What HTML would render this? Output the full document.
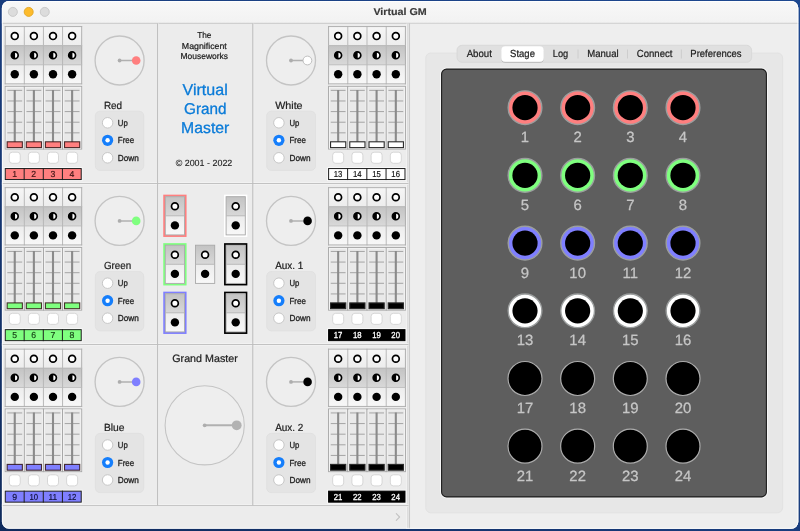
<!DOCTYPE html>
<html><head><meta charset="utf-8"><title>Virtual GM</title>
<style>html,body{margin:0;padding:0;background:#173a78;overflow:hidden}body{width:800px;height:531px}svg{display:block;will-change:transform}text{font-family:"Liberation Sans",sans-serif;text-rendering:geometricPrecision}</style>
</head><body>
<svg width="800" height="531" viewBox="0 0 800 531" font-family="Liberation Sans, sans-serif">
<defs>
<linearGradient id="desk" x1="0" y1="1" x2="1" y2="0"><stop offset="0" stop-color="#0f2a5c"/><stop offset="0.5" stop-color="#193d7e"/><stop offset="1" stop-color="#1d4890"/></linearGradient>
<linearGradient id="gLight1" x1="0" y1="0" x2="0" y2="1"><stop offset="0" stop-color="#f6f6f6"/><stop offset="1" stop-color="#ededed"/></linearGradient>
<linearGradient id="gDark" x1="0" y1="0" x2="0" y2="1"><stop offset="0" stop-color="#c3c3c3"/><stop offset="1" stop-color="#d8d8d8"/></linearGradient>
<linearGradient id="gLight2" x1="0" y1="0" x2="0" y2="1"><stop offset="0" stop-color="#ececec"/><stop offset="1" stop-color="#f8f8f8"/></linearGradient>
<linearGradient id="tbar" x1="0" y1="0" x2="0" y2="1"><stop offset="0" stop-color="#f8f8f8"/><stop offset="1" stop-color="#f2f2f2"/></linearGradient>
<clipPath id="win"><rect x="1.9" y="1.0" width="796.4" height="527.8" rx="7" ry="7"/></clipPath>
<filter id="sh" x="-20%" y="-30%" width="140%" height="180%"><feDropShadow dx="0" dy="0.6" stdDeviation="0.7" flood-color="#000" flood-opacity="0.28"/></filter>
</defs>
<rect x="0" y="0" width="800" height="531" fill="url(#desk)"/>
<g clip-path="url(#win)">
<rect x="0" y="0" width="800" height="531" fill="#ececec"/>
<rect x="0" y="0" width="800" height="23" fill="url(#tbar)"/>
<line x1="0" y1="23.3" x2="800" y2="23.3" stroke="#c9c9c9" stroke-width="1"/>
<circle cx="12.85" cy="11.9" r="4.5" fill="#dcdcdc" stroke="#c6c6c6" stroke-width="0.9"/>
<circle cx="28.7" cy="11.9" r="4.5" fill="#fdbb2c" stroke="#e2a622" stroke-width="0.9"/>
<circle cx="44.75" cy="11.9" r="4.5" fill="#dcdcdc" stroke="#c6c6c6" stroke-width="0.9"/>
<text x="400.1" y="15.0" font-size="9.9" fill="#3a3a3a" text-anchor="middle" font-weight="bold" textLength="53.4" lengthAdjust="spacingAndGlyphs" stroke="#3a3a3a" stroke-width="0.15" stroke-linejoin="round" >Virtual GM</text>
<rect x="410" y="23.8" width="390" height="510" fill="#eeeeee"/>
<rect x="406.2" y="23.6" width="3.2" height="510" fill="#f2f2f2"/>
<line x1="407.8" y1="23.3" x2="407.8" y2="531" stroke="#d8d8d8" stroke-width="1.2"/>
<line x1="409.45" y1="23.3" x2="409.45" y2="531" stroke="#c9c9c9" stroke-width="1.15"/>
<line x1="0" y1="182.6" x2="408.4" y2="182.6" stroke="#f4f4f4" stroke-width="0.8"/>
<line x1="0" y1="184.4" x2="408.4" y2="184.4" stroke="#f2f2f2" stroke-width="0.8"/>
<line x1="0" y1="343.6" x2="408.4" y2="343.6" stroke="#f4f4f4" stroke-width="0.8"/>
<line x1="0" y1="345.4" x2="408.4" y2="345.4" stroke="#f2f2f2" stroke-width="0.8"/>
<line x1="0" y1="504.70000000000005" x2="408.4" y2="504.70000000000005" stroke="#f4f4f4" stroke-width="0.8"/>
<line x1="0" y1="506.5" x2="408.4" y2="506.5" stroke="#f2f2f2" stroke-width="0.8"/>
<line x1="158.5" y1="23.5" x2="158.5" y2="505.6" stroke="#f4f4f4" stroke-width="0.8"/>
<line x1="253.70000000000002" y1="23.5" x2="253.70000000000002" y2="505.6" stroke="#f4f4f4" stroke-width="0.8"/>
<line x1="0" y1="183.5" x2="408.4" y2="183.5" stroke="#c2c2c2" stroke-width="1"/>
<line x1="0" y1="344.5" x2="408.4" y2="344.5" stroke="#c2c2c2" stroke-width="1"/>
<line x1="0" y1="505.6" x2="408.4" y2="505.6" stroke="#c2c2c2" stroke-width="1"/>
<line x1="157.6" y1="23.5" x2="157.6" y2="505.6" stroke="#bcbcbc" stroke-width="1.05"/>
<line x1="252.8" y1="23.5" x2="252.8" y2="505.6" stroke="#bcbcbc" stroke-width="1.05"/>
<path d="M396.3,513.6 L399.6,517 L396.3,520.4" fill="none" stroke="#c3c3c3" stroke-width="1.1" stroke-linecap="round" stroke-linejoin="round"/>
<rect x="4.75" y="26.1" width="77.38000000000001" height="19.1" fill="url(#gLight1)"/>
<rect x="4.75" y="45.2" width="77.38000000000001" height="19.1" fill="url(#gDark)"/>
<rect x="4.75" y="64.30000000000001" width="77.38000000000001" height="20.0" fill="url(#gLight2)"/>
<line x1="5.2" y1="26.1" x2="5.2" y2="84.30000000000001" stroke="#adadad" stroke-width="0.95"/>
<line x1="24.32" y1="26.1" x2="24.32" y2="84.30000000000001" stroke="#b6b6b6" stroke-width="0.95"/>
<line x1="43.44" y1="26.1" x2="43.44" y2="84.30000000000001" stroke="#b6b6b6" stroke-width="0.95"/>
<line x1="62.56" y1="26.1" x2="62.56" y2="84.30000000000001" stroke="#b6b6b6" stroke-width="0.95"/>
<line x1="81.68" y1="26.1" x2="81.68" y2="84.30000000000001" stroke="#adadad" stroke-width="0.95"/>
<line x1="4.75" y1="26.55" x2="82.13000000000001" y2="26.55" stroke="#adadad" stroke-width="0.95"/>
<line x1="4.75" y1="45.65" x2="82.13000000000001" y2="45.65" stroke="#b8b8b8" stroke-width="0.95"/>
<line x1="4.75" y1="64.75" x2="82.13000000000001" y2="64.75" stroke="#b8b8b8" stroke-width="0.95"/>
<line x1="4.75" y1="83.85" x2="82.13000000000001" y2="83.85" stroke="#adadad" stroke-width="0.95"/>
<circle cx="14.76" cy="36.1" r="3.4" fill="#fff" stroke="#000" stroke-width="1.7"/>
<circle cx="14.76" cy="55.2" r="3.4" fill="#fff" stroke="#000" stroke-width="1.7"/>
<path d="M15.06,51.4 A3.8,3.8 0 0 0 15.06,59.0 Z" fill="#000"/>
<circle cx="14.76" cy="74.3" r="4.2" fill="#000"/>
<circle cx="33.88" cy="36.1" r="3.4" fill="#fff" stroke="#000" stroke-width="1.7"/>
<circle cx="33.88" cy="55.2" r="3.4" fill="#fff" stroke="#000" stroke-width="1.7"/>
<path d="M34.18,51.4 A3.8,3.8 0 0 0 34.18,59.0 Z" fill="#000"/>
<circle cx="33.88" cy="74.3" r="4.2" fill="#000"/>
<circle cx="53.0" cy="36.1" r="3.4" fill="#fff" stroke="#000" stroke-width="1.7"/>
<circle cx="53.0" cy="55.2" r="3.4" fill="#fff" stroke="#000" stroke-width="1.7"/>
<path d="M53.3,51.4 A3.8,3.8 0 0 0 53.3,59.0 Z" fill="#000"/>
<circle cx="53.0" cy="74.3" r="4.2" fill="#000"/>
<circle cx="72.12" cy="36.1" r="3.4" fill="#fff" stroke="#000" stroke-width="1.7"/>
<circle cx="72.12" cy="55.2" r="3.4" fill="#fff" stroke="#000" stroke-width="1.7"/>
<path d="M72.42,51.4 A3.8,3.8 0 0 0 72.42,59.0 Z" fill="#000"/>
<circle cx="72.12" cy="74.3" r="4.2" fill="#000"/>
<rect x="4.75" y="85.9" width="77.38000000000001" height="63.6" fill="#e9e9e9"/>
<rect x="5.2" y="86.35000000000001" width="19.12" height="62.7" fill="none" stroke="#a8a8a8" stroke-width="0.95"/>
<rect x="6.15" y="87.30000000000001" width="17.22" height="60.800000000000004" fill="none" stroke="#f4f4f4" stroke-width="0.8"/>
<line x1="7.359999999999999" y1="90.35" x2="22.16" y2="90.35" stroke="#a0a0a0" stroke-width="0.95"/>
<line x1="7.359999999999999" y1="100.97" x2="22.16" y2="100.97" stroke="#a0a0a0" stroke-width="0.95"/>
<line x1="7.359999999999999" y1="111.59" x2="22.16" y2="111.59" stroke="#a0a0a0" stroke-width="0.95"/>
<line x1="7.359999999999999" y1="122.21" x2="22.16" y2="122.21" stroke="#a0a0a0" stroke-width="0.95"/>
<line x1="7.359999999999999" y1="132.83" x2="22.16" y2="132.83" stroke="#a0a0a0" stroke-width="0.95"/>
<line x1="7.359999999999999" y1="143.45" x2="22.16" y2="143.45" stroke="#a0a0a0" stroke-width="0.95"/>
<line x1="14.76" y1="89.9" x2="14.76" y2="142.9" stroke="#8a8a8a" stroke-width="2.1"/>
<rect x="7.16" y="141.8" width="15.2" height="5.8" fill="#FF7F7F" stroke="rgba(40,10,10,0.82)" stroke-width="1.1"/>
<rect x="9.26" y="152.2" width="11" height="11.1" rx="3" fill="#fff" stroke="#d2d2d2" stroke-width="0.9"/>
<rect x="24.32" y="86.35000000000001" width="19.12" height="62.7" fill="none" stroke="#a8a8a8" stroke-width="0.95"/>
<rect x="25.27" y="87.30000000000001" width="17.22" height="60.800000000000004" fill="none" stroke="#f4f4f4" stroke-width="0.8"/>
<line x1="26.480000000000004" y1="90.35" x2="41.28" y2="90.35" stroke="#a0a0a0" stroke-width="0.95"/>
<line x1="26.480000000000004" y1="100.97" x2="41.28" y2="100.97" stroke="#a0a0a0" stroke-width="0.95"/>
<line x1="26.480000000000004" y1="111.59" x2="41.28" y2="111.59" stroke="#a0a0a0" stroke-width="0.95"/>
<line x1="26.480000000000004" y1="122.21" x2="41.28" y2="122.21" stroke="#a0a0a0" stroke-width="0.95"/>
<line x1="26.480000000000004" y1="132.83" x2="41.28" y2="132.83" stroke="#a0a0a0" stroke-width="0.95"/>
<line x1="26.480000000000004" y1="143.45" x2="41.28" y2="143.45" stroke="#a0a0a0" stroke-width="0.95"/>
<line x1="33.88" y1="89.9" x2="33.88" y2="142.9" stroke="#8a8a8a" stroke-width="2.1"/>
<rect x="26.28" y="141.8" width="15.2" height="5.8" fill="#FF7F7F" stroke="rgba(40,10,10,0.82)" stroke-width="1.1"/>
<rect x="28.380000000000003" y="152.2" width="11" height="11.1" rx="3" fill="#fff" stroke="#d2d2d2" stroke-width="0.9"/>
<rect x="43.440000000000005" y="86.35000000000001" width="19.12" height="62.7" fill="none" stroke="#a8a8a8" stroke-width="0.95"/>
<rect x="44.39" y="87.30000000000001" width="17.22" height="60.800000000000004" fill="none" stroke="#f4f4f4" stroke-width="0.8"/>
<line x1="45.6" y1="90.35" x2="60.4" y2="90.35" stroke="#a0a0a0" stroke-width="0.95"/>
<line x1="45.6" y1="100.97" x2="60.4" y2="100.97" stroke="#a0a0a0" stroke-width="0.95"/>
<line x1="45.6" y1="111.59" x2="60.4" y2="111.59" stroke="#a0a0a0" stroke-width="0.95"/>
<line x1="45.6" y1="122.21" x2="60.4" y2="122.21" stroke="#a0a0a0" stroke-width="0.95"/>
<line x1="45.6" y1="132.83" x2="60.4" y2="132.83" stroke="#a0a0a0" stroke-width="0.95"/>
<line x1="45.6" y1="143.45" x2="60.4" y2="143.45" stroke="#a0a0a0" stroke-width="0.95"/>
<line x1="53.0" y1="89.9" x2="53.0" y2="142.9" stroke="#8a8a8a" stroke-width="2.1"/>
<rect x="45.4" y="141.8" width="15.2" height="5.8" fill="#FF7F7F" stroke="rgba(40,10,10,0.82)" stroke-width="1.1"/>
<rect x="47.5" y="152.2" width="11" height="11.1" rx="3" fill="#fff" stroke="#d2d2d2" stroke-width="0.9"/>
<rect x="62.56" y="86.35000000000001" width="19.12" height="62.7" fill="none" stroke="#a8a8a8" stroke-width="0.95"/>
<rect x="63.51" y="87.30000000000001" width="17.22" height="60.800000000000004" fill="none" stroke="#f4f4f4" stroke-width="0.8"/>
<line x1="64.72" y1="90.35" x2="79.52000000000001" y2="90.35" stroke="#a0a0a0" stroke-width="0.95"/>
<line x1="64.72" y1="100.97" x2="79.52000000000001" y2="100.97" stroke="#a0a0a0" stroke-width="0.95"/>
<line x1="64.72" y1="111.59" x2="79.52000000000001" y2="111.59" stroke="#a0a0a0" stroke-width="0.95"/>
<line x1="64.72" y1="122.21" x2="79.52000000000001" y2="122.21" stroke="#a0a0a0" stroke-width="0.95"/>
<line x1="64.72" y1="132.83" x2="79.52000000000001" y2="132.83" stroke="#a0a0a0" stroke-width="0.95"/>
<line x1="64.72" y1="143.45" x2="79.52000000000001" y2="143.45" stroke="#a0a0a0" stroke-width="0.95"/>
<line x1="72.12" y1="89.9" x2="72.12" y2="142.9" stroke="#8a8a8a" stroke-width="2.1"/>
<rect x="64.52000000000001" y="141.8" width="15.2" height="5.8" fill="#FF7F7F" stroke="rgba(40,10,10,0.82)" stroke-width="1.1"/>
<rect x="66.62" y="152.2" width="11" height="11.1" rx="3" fill="#fff" stroke="#d2d2d2" stroke-width="0.9"/>
<rect x="3.85" y="167.14999999999998" width="78.58000000000001" height="13.9" fill="#fafafa"/>
<rect x="5.25" y="168.54999999999998" width="75.98" height="11" fill="#FF7F7F" stroke="#1e1e1e" stroke-width="1"/>
<text x="14.61" y="177.35" font-size="8.7" fill="rgba(30,0,0,0.8)" text-anchor="middle" font-weight="normal" stroke="rgba(30,0,0,0.8)" stroke-width="0.18" stroke-linejoin="round" >1</text>
<line x1="24.17" y1="168.04999999999998" x2="24.17" y2="180.04999999999998" stroke="#1e1e1e" stroke-width="1"/>
<text x="33.73" y="177.35" font-size="8.7" fill="rgba(30,0,0,0.8)" text-anchor="middle" font-weight="normal" stroke="rgba(30,0,0,0.8)" stroke-width="0.18" stroke-linejoin="round" >2</text>
<line x1="43.29" y1="168.04999999999998" x2="43.29" y2="180.04999999999998" stroke="#1e1e1e" stroke-width="1"/>
<text x="52.85" y="177.35" font-size="8.7" fill="rgba(30,0,0,0.8)" text-anchor="middle" font-weight="normal" stroke="rgba(30,0,0,0.8)" stroke-width="0.18" stroke-linejoin="round" >3</text>
<line x1="62.41" y1="168.04999999999998" x2="62.41" y2="180.04999999999998" stroke="#1e1e1e" stroke-width="1"/>
<text x="71.97" y="177.35" font-size="8.7" fill="rgba(30,0,0,0.8)" text-anchor="middle" font-weight="normal" stroke="rgba(30,0,0,0.8)" stroke-width="0.18" stroke-linejoin="round" >4</text>
<rect x="328.1" y="26.1" width="77.78" height="19.1" fill="url(#gLight1)"/>
<rect x="328.1" y="45.2" width="77.78" height="19.1" fill="url(#gDark)"/>
<rect x="328.1" y="64.30000000000001" width="77.78" height="20.0" fill="url(#gLight2)"/>
<line x1="328.55" y1="26.1" x2="328.55" y2="84.30000000000001" stroke="#adadad" stroke-width="0.95"/>
<line x1="347.77" y1="26.1" x2="347.77" y2="84.30000000000001" stroke="#b6b6b6" stroke-width="0.95"/>
<line x1="366.99" y1="26.1" x2="366.99" y2="84.30000000000001" stroke="#b6b6b6" stroke-width="0.95"/>
<line x1="386.21" y1="26.1" x2="386.21" y2="84.30000000000001" stroke="#b6b6b6" stroke-width="0.95"/>
<line x1="405.43" y1="26.1" x2="405.43" y2="84.30000000000001" stroke="#adadad" stroke-width="0.95"/>
<line x1="328.1" y1="26.55" x2="405.88" y2="26.55" stroke="#adadad" stroke-width="0.95"/>
<line x1="328.1" y1="45.65" x2="405.88" y2="45.65" stroke="#b8b8b8" stroke-width="0.95"/>
<line x1="328.1" y1="64.75" x2="405.88" y2="64.75" stroke="#b8b8b8" stroke-width="0.95"/>
<line x1="328.1" y1="83.85" x2="405.88" y2="83.85" stroke="#adadad" stroke-width="0.95"/>
<circle cx="338.16" cy="36.1" r="3.4" fill="#fff" stroke="#000" stroke-width="1.7"/>
<circle cx="338.16" cy="55.2" r="3.4" fill="#fff" stroke="#000" stroke-width="1.7"/>
<path d="M338.46,51.4 A3.8,3.8 0 0 0 338.46,59.0 Z" fill="#000"/>
<circle cx="338.16" cy="74.3" r="4.2" fill="#000"/>
<circle cx="357.38" cy="36.1" r="3.4" fill="#fff" stroke="#000" stroke-width="1.7"/>
<circle cx="357.38" cy="55.2" r="3.4" fill="#fff" stroke="#000" stroke-width="1.7"/>
<path d="M357.68,51.4 A3.8,3.8 0 0 0 357.68,59.0 Z" fill="#000"/>
<circle cx="357.38" cy="74.3" r="4.2" fill="#000"/>
<circle cx="376.6" cy="36.1" r="3.4" fill="#fff" stroke="#000" stroke-width="1.7"/>
<circle cx="376.6" cy="55.2" r="3.4" fill="#fff" stroke="#000" stroke-width="1.7"/>
<path d="M376.9,51.4 A3.8,3.8 0 0 0 376.9,59.0 Z" fill="#000"/>
<circle cx="376.6" cy="74.3" r="4.2" fill="#000"/>
<circle cx="395.82" cy="36.1" r="3.4" fill="#fff" stroke="#000" stroke-width="1.7"/>
<circle cx="395.82" cy="55.2" r="3.4" fill="#fff" stroke="#000" stroke-width="1.7"/>
<path d="M396.12,51.4 A3.8,3.8 0 0 0 396.12,59.0 Z" fill="#000"/>
<circle cx="395.82" cy="74.3" r="4.2" fill="#000"/>
<rect x="328.1" y="85.9" width="77.78" height="63.6" fill="#e9e9e9"/>
<rect x="328.55" y="86.35000000000001" width="19.22" height="62.7" fill="none" stroke="#a8a8a8" stroke-width="0.95"/>
<rect x="329.5" y="87.30000000000001" width="17.32" height="60.800000000000004" fill="none" stroke="#f4f4f4" stroke-width="0.8"/>
<line x1="330.76000000000005" y1="90.35" x2="345.56" y2="90.35" stroke="#a0a0a0" stroke-width="0.95"/>
<line x1="330.76000000000005" y1="100.97" x2="345.56" y2="100.97" stroke="#a0a0a0" stroke-width="0.95"/>
<line x1="330.76000000000005" y1="111.59" x2="345.56" y2="111.59" stroke="#a0a0a0" stroke-width="0.95"/>
<line x1="330.76000000000005" y1="122.21" x2="345.56" y2="122.21" stroke="#a0a0a0" stroke-width="0.95"/>
<line x1="330.76000000000005" y1="132.83" x2="345.56" y2="132.83" stroke="#a0a0a0" stroke-width="0.95"/>
<line x1="330.76000000000005" y1="143.45" x2="345.56" y2="143.45" stroke="#a0a0a0" stroke-width="0.95"/>
<line x1="338.16" y1="89.9" x2="338.16" y2="142.9" stroke="#8a8a8a" stroke-width="2.1"/>
<rect x="330.56" y="141.8" width="15.2" height="5.8" fill="#FFFFFF" stroke="#2a2a2a" stroke-width="1.1"/>
<rect x="332.66" y="152.2" width="11" height="11.1" rx="3" fill="#fff" stroke="#d2d2d2" stroke-width="0.9"/>
<rect x="347.77" y="86.35000000000001" width="19.22" height="62.7" fill="none" stroke="#a8a8a8" stroke-width="0.95"/>
<rect x="348.71999999999997" y="87.30000000000001" width="17.32" height="60.800000000000004" fill="none" stroke="#f4f4f4" stroke-width="0.8"/>
<line x1="349.98" y1="90.35" x2="364.78" y2="90.35" stroke="#a0a0a0" stroke-width="0.95"/>
<line x1="349.98" y1="100.97" x2="364.78" y2="100.97" stroke="#a0a0a0" stroke-width="0.95"/>
<line x1="349.98" y1="111.59" x2="364.78" y2="111.59" stroke="#a0a0a0" stroke-width="0.95"/>
<line x1="349.98" y1="122.21" x2="364.78" y2="122.21" stroke="#a0a0a0" stroke-width="0.95"/>
<line x1="349.98" y1="132.83" x2="364.78" y2="132.83" stroke="#a0a0a0" stroke-width="0.95"/>
<line x1="349.98" y1="143.45" x2="364.78" y2="143.45" stroke="#a0a0a0" stroke-width="0.95"/>
<line x1="357.38" y1="89.9" x2="357.38" y2="142.9" stroke="#8a8a8a" stroke-width="2.1"/>
<rect x="349.78" y="141.8" width="15.2" height="5.8" fill="#FFFFFF" stroke="#2a2a2a" stroke-width="1.1"/>
<rect x="351.88" y="152.2" width="11" height="11.1" rx="3" fill="#fff" stroke="#d2d2d2" stroke-width="0.9"/>
<rect x="366.99" y="86.35000000000001" width="19.22" height="62.7" fill="none" stroke="#a8a8a8" stroke-width="0.95"/>
<rect x="367.94" y="87.30000000000001" width="17.32" height="60.800000000000004" fill="none" stroke="#f4f4f4" stroke-width="0.8"/>
<line x1="369.20000000000005" y1="90.35" x2="384.0" y2="90.35" stroke="#a0a0a0" stroke-width="0.95"/>
<line x1="369.20000000000005" y1="100.97" x2="384.0" y2="100.97" stroke="#a0a0a0" stroke-width="0.95"/>
<line x1="369.20000000000005" y1="111.59" x2="384.0" y2="111.59" stroke="#a0a0a0" stroke-width="0.95"/>
<line x1="369.20000000000005" y1="122.21" x2="384.0" y2="122.21" stroke="#a0a0a0" stroke-width="0.95"/>
<line x1="369.20000000000005" y1="132.83" x2="384.0" y2="132.83" stroke="#a0a0a0" stroke-width="0.95"/>
<line x1="369.20000000000005" y1="143.45" x2="384.0" y2="143.45" stroke="#a0a0a0" stroke-width="0.95"/>
<line x1="376.6" y1="89.9" x2="376.6" y2="142.9" stroke="#8a8a8a" stroke-width="2.1"/>
<rect x="369.0" y="141.8" width="15.2" height="5.8" fill="#FFFFFF" stroke="#2a2a2a" stroke-width="1.1"/>
<rect x="371.1" y="152.2" width="11" height="11.1" rx="3" fill="#fff" stroke="#d2d2d2" stroke-width="0.9"/>
<rect x="386.21" y="86.35000000000001" width="19.22" height="62.7" fill="none" stroke="#a8a8a8" stroke-width="0.95"/>
<rect x="387.15999999999997" y="87.30000000000001" width="17.32" height="60.800000000000004" fill="none" stroke="#f4f4f4" stroke-width="0.8"/>
<line x1="388.42" y1="90.35" x2="403.21999999999997" y2="90.35" stroke="#a0a0a0" stroke-width="0.95"/>
<line x1="388.42" y1="100.97" x2="403.21999999999997" y2="100.97" stroke="#a0a0a0" stroke-width="0.95"/>
<line x1="388.42" y1="111.59" x2="403.21999999999997" y2="111.59" stroke="#a0a0a0" stroke-width="0.95"/>
<line x1="388.42" y1="122.21" x2="403.21999999999997" y2="122.21" stroke="#a0a0a0" stroke-width="0.95"/>
<line x1="388.42" y1="132.83" x2="403.21999999999997" y2="132.83" stroke="#a0a0a0" stroke-width="0.95"/>
<line x1="388.42" y1="143.45" x2="403.21999999999997" y2="143.45" stroke="#a0a0a0" stroke-width="0.95"/>
<line x1="395.82" y1="89.9" x2="395.82" y2="142.9" stroke="#8a8a8a" stroke-width="2.1"/>
<rect x="388.21999999999997" y="141.8" width="15.2" height="5.8" fill="#FFFFFF" stroke="#2a2a2a" stroke-width="1.1"/>
<rect x="390.32" y="152.2" width="11" height="11.1" rx="3" fill="#fff" stroke="#d2d2d2" stroke-width="0.9"/>
<rect x="327.20000000000005" y="167.14999999999998" width="78.98" height="13.9" fill="#fafafa"/>
<rect x="328.6" y="168.54999999999998" width="76.38" height="11" fill="#FFFFFF" stroke="#1e1e1e" stroke-width="1"/>
<text x="338.01" y="177.35" font-size="8.7" fill="#111" text-anchor="middle" font-weight="normal" textLength="8.6" lengthAdjust="spacingAndGlyphs" stroke="#111" stroke-width="0.18" stroke-linejoin="round" >13</text>
<line x1="347.62" y1="168.04999999999998" x2="347.62" y2="180.04999999999998" stroke="#1e1e1e" stroke-width="1"/>
<text x="357.23" y="177.35" font-size="8.7" fill="#111" text-anchor="middle" font-weight="normal" textLength="8.6" lengthAdjust="spacingAndGlyphs" stroke="#111" stroke-width="0.18" stroke-linejoin="round" >14</text>
<line x1="366.84000000000003" y1="168.04999999999998" x2="366.84000000000003" y2="180.04999999999998" stroke="#1e1e1e" stroke-width="1"/>
<text x="376.45" y="177.35" font-size="8.7" fill="#111" text-anchor="middle" font-weight="normal" textLength="8.6" lengthAdjust="spacingAndGlyphs" stroke="#111" stroke-width="0.18" stroke-linejoin="round" >15</text>
<line x1="386.06" y1="168.04999999999998" x2="386.06" y2="180.04999999999998" stroke="#1e1e1e" stroke-width="1"/>
<text x="395.67" y="177.35" font-size="8.7" fill="#111" text-anchor="middle" font-weight="normal" textLength="8.6" lengthAdjust="spacingAndGlyphs" stroke="#111" stroke-width="0.18" stroke-linejoin="round" >16</text>
<circle cx="119.6" cy="60.5" r="24.5" fill="#eeeeee" stroke="#c4c4c4" stroke-width="1.35"/>
<line x1="119.6" y1="60.5" x2="136.2" y2="60.5" stroke="#b0b0b0" stroke-width="1.5"/>
<circle cx="119.6" cy="60.5" r="1.9" fill="#adadad"/>
<circle cx="136.2" cy="60.5" r="4.3" fill="#FF7F7F"/>
<circle cx="291" cy="60.5" r="24.5" fill="#eeeeee" stroke="#c4c4c4" stroke-width="1.35"/>
<line x1="291" y1="60.5" x2="307.4" y2="60.5" stroke="#b0b0b0" stroke-width="1.5"/>
<circle cx="291" cy="60.5" r="1.9" fill="#adadad"/>
<circle cx="307.4" cy="60.5" r="4.4" fill="#fff" stroke="#b8b8b8" stroke-width="0.9"/>
<text x="103.9" y="108.5" font-size="10.4" fill="#222" text-anchor="start" font-weight="normal" textLength="18.2" lengthAdjust="spacingAndGlyphs" stroke="#222" stroke-width="0.22" stroke-linejoin="round" >Red</text>
<rect x="95.4" y="111.2" width="48.3" height="59.2" rx="4.5" fill="#e4e4e4" stroke="#dedede" stroke-width="0.8"/>
<circle cx="107.6" cy="122.8" r="5.25" fill="#fff" stroke="#c2c2c2" stroke-width="0.9"/>
<text x="117.8" y="125.89999999999999" font-size="8.7" fill="#222" text-anchor="start" font-weight="normal" textLength="9.9" lengthAdjust="spacingAndGlyphs" stroke="#222" stroke-width="0.3" stroke-linejoin="round" >Up</text>
<circle cx="107.6" cy="140.3" r="5.6" fill="#157efb"/>
<circle cx="107.6" cy="140.3" r="2.2" fill="#fff"/>
<text x="117.8" y="143.4" font-size="8.7" fill="#222" text-anchor="start" font-weight="normal" textLength="16.4" lengthAdjust="spacingAndGlyphs" stroke="#222" stroke-width="0.3" stroke-linejoin="round" >Free</text>
<circle cx="107.6" cy="157.8" r="5.25" fill="#fff" stroke="#c2c2c2" stroke-width="0.9"/>
<text x="117.8" y="160.9" font-size="8.7" fill="#222" text-anchor="start" font-weight="normal" textLength="21.0" lengthAdjust="spacingAndGlyphs" stroke="#222" stroke-width="0.3" stroke-linejoin="round" >Down</text>
<text x="275.20000000000005" y="108.5" font-size="10.4" fill="#222" text-anchor="start" font-weight="normal" textLength="27.4" lengthAdjust="spacingAndGlyphs" stroke="#222" stroke-width="0.22" stroke-linejoin="round" >White</text>
<rect x="266.70000000000005" y="111.2" width="48.8" height="59.2" rx="4.5" fill="#e4e4e4" stroke="#dedede" stroke-width="0.8"/>
<circle cx="278.9" cy="122.8" r="5.25" fill="#fff" stroke="#c2c2c2" stroke-width="0.9"/>
<text x="289.5" y="125.89999999999999" font-size="8.7" fill="#222" text-anchor="start" font-weight="normal" textLength="9.9" lengthAdjust="spacingAndGlyphs" stroke="#222" stroke-width="0.3" stroke-linejoin="round" >Up</text>
<circle cx="278.9" cy="140.3" r="5.6" fill="#157efb"/>
<circle cx="278.9" cy="140.3" r="2.2" fill="#fff"/>
<text x="289.5" y="143.4" font-size="8.7" fill="#222" text-anchor="start" font-weight="normal" textLength="16.4" lengthAdjust="spacingAndGlyphs" stroke="#222" stroke-width="0.3" stroke-linejoin="round" >Free</text>
<circle cx="278.9" cy="157.8" r="5.25" fill="#fff" stroke="#c2c2c2" stroke-width="0.9"/>
<text x="289.5" y="160.9" font-size="8.7" fill="#222" text-anchor="start" font-weight="normal" textLength="21.0" lengthAdjust="spacingAndGlyphs" stroke="#222" stroke-width="0.3" stroke-linejoin="round" >Down</text>
<rect x="4.75" y="187.2" width="77.38000000000001" height="19.1" fill="url(#gLight1)"/>
<rect x="4.75" y="206.29999999999998" width="77.38000000000001" height="19.1" fill="url(#gDark)"/>
<rect x="4.75" y="225.39999999999998" width="77.38000000000001" height="20.0" fill="url(#gLight2)"/>
<line x1="5.2" y1="187.2" x2="5.2" y2="245.39999999999998" stroke="#adadad" stroke-width="0.95"/>
<line x1="24.32" y1="187.2" x2="24.32" y2="245.39999999999998" stroke="#b6b6b6" stroke-width="0.95"/>
<line x1="43.44" y1="187.2" x2="43.44" y2="245.39999999999998" stroke="#b6b6b6" stroke-width="0.95"/>
<line x1="62.56" y1="187.2" x2="62.56" y2="245.39999999999998" stroke="#b6b6b6" stroke-width="0.95"/>
<line x1="81.68" y1="187.2" x2="81.68" y2="245.39999999999998" stroke="#adadad" stroke-width="0.95"/>
<line x1="4.75" y1="187.65" x2="82.13000000000001" y2="187.65" stroke="#adadad" stroke-width="0.95"/>
<line x1="4.75" y1="206.75" x2="82.13000000000001" y2="206.75" stroke="#b8b8b8" stroke-width="0.95"/>
<line x1="4.75" y1="225.85" x2="82.13000000000001" y2="225.85" stroke="#b8b8b8" stroke-width="0.95"/>
<line x1="4.75" y1="244.95" x2="82.13000000000001" y2="244.95" stroke="#adadad" stroke-width="0.95"/>
<circle cx="14.76" cy="197.2" r="3.4" fill="#fff" stroke="#000" stroke-width="1.7"/>
<circle cx="14.76" cy="216.3" r="3.4" fill="#fff" stroke="#000" stroke-width="1.7"/>
<path d="M15.06,212.5 A3.8,3.8 0 0 0 15.06,220.1 Z" fill="#000"/>
<circle cx="14.76" cy="235.4" r="4.2" fill="#000"/>
<circle cx="33.88" cy="197.2" r="3.4" fill="#fff" stroke="#000" stroke-width="1.7"/>
<circle cx="33.88" cy="216.3" r="3.4" fill="#fff" stroke="#000" stroke-width="1.7"/>
<path d="M34.18,212.5 A3.8,3.8 0 0 0 34.18,220.1 Z" fill="#000"/>
<circle cx="33.88" cy="235.4" r="4.2" fill="#000"/>
<circle cx="53.0" cy="197.2" r="3.4" fill="#fff" stroke="#000" stroke-width="1.7"/>
<circle cx="53.0" cy="216.3" r="3.4" fill="#fff" stroke="#000" stroke-width="1.7"/>
<path d="M53.3,212.5 A3.8,3.8 0 0 0 53.3,220.1 Z" fill="#000"/>
<circle cx="53.0" cy="235.4" r="4.2" fill="#000"/>
<circle cx="72.12" cy="197.2" r="3.4" fill="#fff" stroke="#000" stroke-width="1.7"/>
<circle cx="72.12" cy="216.3" r="3.4" fill="#fff" stroke="#000" stroke-width="1.7"/>
<path d="M72.42,212.5 A3.8,3.8 0 0 0 72.42,220.1 Z" fill="#000"/>
<circle cx="72.12" cy="235.4" r="4.2" fill="#000"/>
<rect x="4.75" y="247.0" width="77.38000000000001" height="63.6" fill="#e9e9e9"/>
<rect x="5.2" y="247.45" width="19.12" height="62.7" fill="none" stroke="#a8a8a8" stroke-width="0.95"/>
<rect x="6.15" y="248.4" width="17.22" height="60.800000000000004" fill="none" stroke="#f4f4f4" stroke-width="0.8"/>
<line x1="7.359999999999999" y1="251.45" x2="22.16" y2="251.45" stroke="#a0a0a0" stroke-width="0.95"/>
<line x1="7.359999999999999" y1="262.07" x2="22.16" y2="262.07" stroke="#a0a0a0" stroke-width="0.95"/>
<line x1="7.359999999999999" y1="272.69" x2="22.16" y2="272.69" stroke="#a0a0a0" stroke-width="0.95"/>
<line x1="7.359999999999999" y1="283.31" x2="22.16" y2="283.31" stroke="#a0a0a0" stroke-width="0.95"/>
<line x1="7.359999999999999" y1="293.93" x2="22.16" y2="293.93" stroke="#a0a0a0" stroke-width="0.95"/>
<line x1="7.359999999999999" y1="304.55" x2="22.16" y2="304.55" stroke="#a0a0a0" stroke-width="0.95"/>
<line x1="14.76" y1="251.0" x2="14.76" y2="304.0" stroke="#8a8a8a" stroke-width="2.1"/>
<rect x="7.16" y="302.9" width="15.2" height="5.8" fill="#7FFF7F" stroke="rgba(40,10,10,0.82)" stroke-width="1.1"/>
<rect x="9.26" y="313.29999999999995" width="11" height="11.1" rx="3" fill="#fff" stroke="#d2d2d2" stroke-width="0.9"/>
<rect x="24.32" y="247.45" width="19.12" height="62.7" fill="none" stroke="#a8a8a8" stroke-width="0.95"/>
<rect x="25.27" y="248.4" width="17.22" height="60.800000000000004" fill="none" stroke="#f4f4f4" stroke-width="0.8"/>
<line x1="26.480000000000004" y1="251.45" x2="41.28" y2="251.45" stroke="#a0a0a0" stroke-width="0.95"/>
<line x1="26.480000000000004" y1="262.07" x2="41.28" y2="262.07" stroke="#a0a0a0" stroke-width="0.95"/>
<line x1="26.480000000000004" y1="272.69" x2="41.28" y2="272.69" stroke="#a0a0a0" stroke-width="0.95"/>
<line x1="26.480000000000004" y1="283.31" x2="41.28" y2="283.31" stroke="#a0a0a0" stroke-width="0.95"/>
<line x1="26.480000000000004" y1="293.93" x2="41.28" y2="293.93" stroke="#a0a0a0" stroke-width="0.95"/>
<line x1="26.480000000000004" y1="304.55" x2="41.28" y2="304.55" stroke="#a0a0a0" stroke-width="0.95"/>
<line x1="33.88" y1="251.0" x2="33.88" y2="304.0" stroke="#8a8a8a" stroke-width="2.1"/>
<rect x="26.28" y="302.9" width="15.2" height="5.8" fill="#7FFF7F" stroke="rgba(40,10,10,0.82)" stroke-width="1.1"/>
<rect x="28.380000000000003" y="313.29999999999995" width="11" height="11.1" rx="3" fill="#fff" stroke="#d2d2d2" stroke-width="0.9"/>
<rect x="43.440000000000005" y="247.45" width="19.12" height="62.7" fill="none" stroke="#a8a8a8" stroke-width="0.95"/>
<rect x="44.39" y="248.4" width="17.22" height="60.800000000000004" fill="none" stroke="#f4f4f4" stroke-width="0.8"/>
<line x1="45.6" y1="251.45" x2="60.4" y2="251.45" stroke="#a0a0a0" stroke-width="0.95"/>
<line x1="45.6" y1="262.07" x2="60.4" y2="262.07" stroke="#a0a0a0" stroke-width="0.95"/>
<line x1="45.6" y1="272.69" x2="60.4" y2="272.69" stroke="#a0a0a0" stroke-width="0.95"/>
<line x1="45.6" y1="283.31" x2="60.4" y2="283.31" stroke="#a0a0a0" stroke-width="0.95"/>
<line x1="45.6" y1="293.93" x2="60.4" y2="293.93" stroke="#a0a0a0" stroke-width="0.95"/>
<line x1="45.6" y1="304.55" x2="60.4" y2="304.55" stroke="#a0a0a0" stroke-width="0.95"/>
<line x1="53.0" y1="251.0" x2="53.0" y2="304.0" stroke="#8a8a8a" stroke-width="2.1"/>
<rect x="45.4" y="302.9" width="15.2" height="5.8" fill="#7FFF7F" stroke="rgba(40,10,10,0.82)" stroke-width="1.1"/>
<rect x="47.5" y="313.29999999999995" width="11" height="11.1" rx="3" fill="#fff" stroke="#d2d2d2" stroke-width="0.9"/>
<rect x="62.56" y="247.45" width="19.12" height="62.7" fill="none" stroke="#a8a8a8" stroke-width="0.95"/>
<rect x="63.51" y="248.4" width="17.22" height="60.800000000000004" fill="none" stroke="#f4f4f4" stroke-width="0.8"/>
<line x1="64.72" y1="251.45" x2="79.52000000000001" y2="251.45" stroke="#a0a0a0" stroke-width="0.95"/>
<line x1="64.72" y1="262.07" x2="79.52000000000001" y2="262.07" stroke="#a0a0a0" stroke-width="0.95"/>
<line x1="64.72" y1="272.69" x2="79.52000000000001" y2="272.69" stroke="#a0a0a0" stroke-width="0.95"/>
<line x1="64.72" y1="283.31" x2="79.52000000000001" y2="283.31" stroke="#a0a0a0" stroke-width="0.95"/>
<line x1="64.72" y1="293.93" x2="79.52000000000001" y2="293.93" stroke="#a0a0a0" stroke-width="0.95"/>
<line x1="64.72" y1="304.55" x2="79.52000000000001" y2="304.55" stroke="#a0a0a0" stroke-width="0.95"/>
<line x1="72.12" y1="251.0" x2="72.12" y2="304.0" stroke="#8a8a8a" stroke-width="2.1"/>
<rect x="64.52000000000001" y="302.9" width="15.2" height="5.8" fill="#7FFF7F" stroke="rgba(40,10,10,0.82)" stroke-width="1.1"/>
<rect x="66.62" y="313.29999999999995" width="11" height="11.1" rx="3" fill="#fff" stroke="#d2d2d2" stroke-width="0.9"/>
<rect x="3.85" y="328.25" width="78.58000000000001" height="13.9" fill="#fafafa"/>
<rect x="5.25" y="329.65" width="75.98" height="11" fill="#7FFF7F" stroke="#1e1e1e" stroke-width="1"/>
<text x="14.61" y="338.45" font-size="8.7" fill="rgba(0,30,0,0.8)" text-anchor="middle" font-weight="normal" stroke="rgba(0,30,0,0.8)" stroke-width="0.18" stroke-linejoin="round" >5</text>
<line x1="24.17" y1="329.15" x2="24.17" y2="341.15" stroke="#1e1e1e" stroke-width="1"/>
<text x="33.73" y="338.45" font-size="8.7" fill="rgba(0,30,0,0.8)" text-anchor="middle" font-weight="normal" stroke="rgba(0,30,0,0.8)" stroke-width="0.18" stroke-linejoin="round" >6</text>
<line x1="43.29" y1="329.15" x2="43.29" y2="341.15" stroke="#1e1e1e" stroke-width="1"/>
<text x="52.85" y="338.45" font-size="8.7" fill="rgba(0,30,0,0.8)" text-anchor="middle" font-weight="normal" stroke="rgba(0,30,0,0.8)" stroke-width="0.18" stroke-linejoin="round" >7</text>
<line x1="62.41" y1="329.15" x2="62.41" y2="341.15" stroke="#1e1e1e" stroke-width="1"/>
<text x="71.97" y="338.45" font-size="8.7" fill="rgba(0,30,0,0.8)" text-anchor="middle" font-weight="normal" stroke="rgba(0,30,0,0.8)" stroke-width="0.18" stroke-linejoin="round" >8</text>
<rect x="328.1" y="187.2" width="77.78" height="19.1" fill="url(#gLight1)"/>
<rect x="328.1" y="206.29999999999998" width="77.78" height="19.1" fill="url(#gDark)"/>
<rect x="328.1" y="225.39999999999998" width="77.78" height="20.0" fill="url(#gLight2)"/>
<line x1="328.55" y1="187.2" x2="328.55" y2="245.39999999999998" stroke="#adadad" stroke-width="0.95"/>
<line x1="347.77" y1="187.2" x2="347.77" y2="245.39999999999998" stroke="#b6b6b6" stroke-width="0.95"/>
<line x1="366.99" y1="187.2" x2="366.99" y2="245.39999999999998" stroke="#b6b6b6" stroke-width="0.95"/>
<line x1="386.21" y1="187.2" x2="386.21" y2="245.39999999999998" stroke="#b6b6b6" stroke-width="0.95"/>
<line x1="405.43" y1="187.2" x2="405.43" y2="245.39999999999998" stroke="#adadad" stroke-width="0.95"/>
<line x1="328.1" y1="187.65" x2="405.88" y2="187.65" stroke="#adadad" stroke-width="0.95"/>
<line x1="328.1" y1="206.75" x2="405.88" y2="206.75" stroke="#b8b8b8" stroke-width="0.95"/>
<line x1="328.1" y1="225.85" x2="405.88" y2="225.85" stroke="#b8b8b8" stroke-width="0.95"/>
<line x1="328.1" y1="244.95" x2="405.88" y2="244.95" stroke="#adadad" stroke-width="0.95"/>
<circle cx="338.16" cy="197.2" r="3.4" fill="#fff" stroke="#000" stroke-width="1.7"/>
<circle cx="338.16" cy="216.3" r="3.4" fill="#fff" stroke="#000" stroke-width="1.7"/>
<path d="M338.46,212.5 A3.8,3.8 0 0 0 338.46,220.1 Z" fill="#000"/>
<circle cx="338.16" cy="235.4" r="4.2" fill="#000"/>
<circle cx="357.38" cy="197.2" r="3.4" fill="#fff" stroke="#000" stroke-width="1.7"/>
<circle cx="357.38" cy="216.3" r="3.4" fill="#fff" stroke="#000" stroke-width="1.7"/>
<path d="M357.68,212.5 A3.8,3.8 0 0 0 357.68,220.1 Z" fill="#000"/>
<circle cx="357.38" cy="235.4" r="4.2" fill="#000"/>
<circle cx="376.6" cy="197.2" r="3.4" fill="#fff" stroke="#000" stroke-width="1.7"/>
<circle cx="376.6" cy="216.3" r="3.4" fill="#fff" stroke="#000" stroke-width="1.7"/>
<path d="M376.9,212.5 A3.8,3.8 0 0 0 376.9,220.1 Z" fill="#000"/>
<circle cx="376.6" cy="235.4" r="4.2" fill="#000"/>
<circle cx="395.82" cy="197.2" r="3.4" fill="#fff" stroke="#000" stroke-width="1.7"/>
<circle cx="395.82" cy="216.3" r="3.4" fill="#fff" stroke="#000" stroke-width="1.7"/>
<path d="M396.12,212.5 A3.8,3.8 0 0 0 396.12,220.1 Z" fill="#000"/>
<circle cx="395.82" cy="235.4" r="4.2" fill="#000"/>
<rect x="328.1" y="247.0" width="77.78" height="63.6" fill="#e9e9e9"/>
<rect x="328.55" y="247.45" width="19.22" height="62.7" fill="none" stroke="#a8a8a8" stroke-width="0.95"/>
<rect x="329.5" y="248.4" width="17.32" height="60.800000000000004" fill="none" stroke="#f4f4f4" stroke-width="0.8"/>
<line x1="330.76000000000005" y1="251.45" x2="345.56" y2="251.45" stroke="#a0a0a0" stroke-width="0.95"/>
<line x1="330.76000000000005" y1="262.07" x2="345.56" y2="262.07" stroke="#a0a0a0" stroke-width="0.95"/>
<line x1="330.76000000000005" y1="272.69" x2="345.56" y2="272.69" stroke="#a0a0a0" stroke-width="0.95"/>
<line x1="330.76000000000005" y1="283.31" x2="345.56" y2="283.31" stroke="#a0a0a0" stroke-width="0.95"/>
<line x1="330.76000000000005" y1="293.93" x2="345.56" y2="293.93" stroke="#a0a0a0" stroke-width="0.95"/>
<line x1="330.76000000000005" y1="304.55" x2="345.56" y2="304.55" stroke="#a0a0a0" stroke-width="0.95"/>
<line x1="338.16" y1="251.0" x2="338.16" y2="304.0" stroke="#8a8a8a" stroke-width="2.1"/>
<rect x="330.56" y="302.9" width="15.2" height="5.8" fill="#000000" stroke="#2a2a2a" stroke-width="1.1"/>
<rect x="332.66" y="313.29999999999995" width="11" height="11.1" rx="3" fill="#fff" stroke="#d2d2d2" stroke-width="0.9"/>
<rect x="347.77" y="247.45" width="19.22" height="62.7" fill="none" stroke="#a8a8a8" stroke-width="0.95"/>
<rect x="348.71999999999997" y="248.4" width="17.32" height="60.800000000000004" fill="none" stroke="#f4f4f4" stroke-width="0.8"/>
<line x1="349.98" y1="251.45" x2="364.78" y2="251.45" stroke="#a0a0a0" stroke-width="0.95"/>
<line x1="349.98" y1="262.07" x2="364.78" y2="262.07" stroke="#a0a0a0" stroke-width="0.95"/>
<line x1="349.98" y1="272.69" x2="364.78" y2="272.69" stroke="#a0a0a0" stroke-width="0.95"/>
<line x1="349.98" y1="283.31" x2="364.78" y2="283.31" stroke="#a0a0a0" stroke-width="0.95"/>
<line x1="349.98" y1="293.93" x2="364.78" y2="293.93" stroke="#a0a0a0" stroke-width="0.95"/>
<line x1="349.98" y1="304.55" x2="364.78" y2="304.55" stroke="#a0a0a0" stroke-width="0.95"/>
<line x1="357.38" y1="251.0" x2="357.38" y2="304.0" stroke="#8a8a8a" stroke-width="2.1"/>
<rect x="349.78" y="302.9" width="15.2" height="5.8" fill="#000000" stroke="#2a2a2a" stroke-width="1.1"/>
<rect x="351.88" y="313.29999999999995" width="11" height="11.1" rx="3" fill="#fff" stroke="#d2d2d2" stroke-width="0.9"/>
<rect x="366.99" y="247.45" width="19.22" height="62.7" fill="none" stroke="#a8a8a8" stroke-width="0.95"/>
<rect x="367.94" y="248.4" width="17.32" height="60.800000000000004" fill="none" stroke="#f4f4f4" stroke-width="0.8"/>
<line x1="369.20000000000005" y1="251.45" x2="384.0" y2="251.45" stroke="#a0a0a0" stroke-width="0.95"/>
<line x1="369.20000000000005" y1="262.07" x2="384.0" y2="262.07" stroke="#a0a0a0" stroke-width="0.95"/>
<line x1="369.20000000000005" y1="272.69" x2="384.0" y2="272.69" stroke="#a0a0a0" stroke-width="0.95"/>
<line x1="369.20000000000005" y1="283.31" x2="384.0" y2="283.31" stroke="#a0a0a0" stroke-width="0.95"/>
<line x1="369.20000000000005" y1="293.93" x2="384.0" y2="293.93" stroke="#a0a0a0" stroke-width="0.95"/>
<line x1="369.20000000000005" y1="304.55" x2="384.0" y2="304.55" stroke="#a0a0a0" stroke-width="0.95"/>
<line x1="376.6" y1="251.0" x2="376.6" y2="304.0" stroke="#8a8a8a" stroke-width="2.1"/>
<rect x="369.0" y="302.9" width="15.2" height="5.8" fill="#000000" stroke="#2a2a2a" stroke-width="1.1"/>
<rect x="371.1" y="313.29999999999995" width="11" height="11.1" rx="3" fill="#fff" stroke="#d2d2d2" stroke-width="0.9"/>
<rect x="386.21" y="247.45" width="19.22" height="62.7" fill="none" stroke="#a8a8a8" stroke-width="0.95"/>
<rect x="387.15999999999997" y="248.4" width="17.32" height="60.800000000000004" fill="none" stroke="#f4f4f4" stroke-width="0.8"/>
<line x1="388.42" y1="251.45" x2="403.21999999999997" y2="251.45" stroke="#a0a0a0" stroke-width="0.95"/>
<line x1="388.42" y1="262.07" x2="403.21999999999997" y2="262.07" stroke="#a0a0a0" stroke-width="0.95"/>
<line x1="388.42" y1="272.69" x2="403.21999999999997" y2="272.69" stroke="#a0a0a0" stroke-width="0.95"/>
<line x1="388.42" y1="283.31" x2="403.21999999999997" y2="283.31" stroke="#a0a0a0" stroke-width="0.95"/>
<line x1="388.42" y1="293.93" x2="403.21999999999997" y2="293.93" stroke="#a0a0a0" stroke-width="0.95"/>
<line x1="388.42" y1="304.55" x2="403.21999999999997" y2="304.55" stroke="#a0a0a0" stroke-width="0.95"/>
<line x1="395.82" y1="251.0" x2="395.82" y2="304.0" stroke="#8a8a8a" stroke-width="2.1"/>
<rect x="388.21999999999997" y="302.9" width="15.2" height="5.8" fill="#000000" stroke="#2a2a2a" stroke-width="1.1"/>
<rect x="390.32" y="313.29999999999995" width="11" height="11.1" rx="3" fill="#fff" stroke="#d2d2d2" stroke-width="0.9"/>
<rect x="327.20000000000005" y="328.25" width="78.98" height="13.9" fill="#fafafa"/>
<rect x="328.6" y="329.65" width="76.38" height="11" fill="#000000" stroke="#000" stroke-width="1"/>
<text x="338.01" y="338.45" font-size="8.7" fill="#fff" text-anchor="middle" font-weight="normal" textLength="8.6" lengthAdjust="spacingAndGlyphs" stroke="#fff" stroke-width="0.3" stroke-linejoin="round" >17</text>
<text x="357.23" y="338.45" font-size="8.7" fill="#fff" text-anchor="middle" font-weight="normal" textLength="8.6" lengthAdjust="spacingAndGlyphs" stroke="#fff" stroke-width="0.3" stroke-linejoin="round" >18</text>
<text x="376.45" y="338.45" font-size="8.7" fill="#fff" text-anchor="middle" font-weight="normal" textLength="8.6" lengthAdjust="spacingAndGlyphs" stroke="#fff" stroke-width="0.3" stroke-linejoin="round" >19</text>
<text x="395.67" y="338.45" font-size="8.7" fill="#fff" text-anchor="middle" font-weight="normal" textLength="8.6" lengthAdjust="spacingAndGlyphs" stroke="#fff" stroke-width="0.3" stroke-linejoin="round" >20</text>
<circle cx="119.6" cy="220.9" r="24.5" fill="#eeeeee" stroke="#c4c4c4" stroke-width="1.35"/>
<line x1="119.6" y1="220.9" x2="136.2" y2="220.9" stroke="#b0b0b0" stroke-width="1.5"/>
<circle cx="119.6" cy="220.9" r="1.9" fill="#adadad"/>
<circle cx="136.2" cy="220.9" r="4.3" fill="#7FFF7F"/>
<circle cx="291" cy="220.9" r="24.5" fill="#eeeeee" stroke="#c4c4c4" stroke-width="1.35"/>
<line x1="291" y1="220.9" x2="307.6" y2="220.9" stroke="#b0b0b0" stroke-width="1.5"/>
<circle cx="291" cy="220.9" r="1.9" fill="#adadad"/>
<circle cx="307.6" cy="220.9" r="4.3" fill="#000"/>
<text x="103.9" y="268.9" font-size="10.4" fill="#222" text-anchor="start" font-weight="normal" textLength="27.2" lengthAdjust="spacingAndGlyphs" stroke="#222" stroke-width="0.22" stroke-linejoin="round" >Green</text>
<rect x="95.4" y="271.6" width="48.3" height="59.2" rx="4.5" fill="#e4e4e4" stroke="#dedede" stroke-width="0.8"/>
<circle cx="107.6" cy="283.2" r="5.25" fill="#fff" stroke="#c2c2c2" stroke-width="0.9"/>
<text x="117.8" y="286.3" font-size="8.7" fill="#222" text-anchor="start" font-weight="normal" textLength="9.9" lengthAdjust="spacingAndGlyphs" stroke="#222" stroke-width="0.3" stroke-linejoin="round" >Up</text>
<circle cx="107.6" cy="300.70000000000005" r="5.6" fill="#157efb"/>
<circle cx="107.6" cy="300.70000000000005" r="2.2" fill="#fff"/>
<text x="117.8" y="303.80000000000007" font-size="8.7" fill="#222" text-anchor="start" font-weight="normal" textLength="16.4" lengthAdjust="spacingAndGlyphs" stroke="#222" stroke-width="0.3" stroke-linejoin="round" >Free</text>
<circle cx="107.6" cy="318.20000000000005" r="5.25" fill="#fff" stroke="#c2c2c2" stroke-width="0.9"/>
<text x="117.8" y="321.30000000000007" font-size="8.7" fill="#222" text-anchor="start" font-weight="normal" textLength="21.0" lengthAdjust="spacingAndGlyphs" stroke="#222" stroke-width="0.3" stroke-linejoin="round" >Down</text>
<text x="275.20000000000005" y="268.9" font-size="10.4" fill="#222" text-anchor="start" font-weight="normal" textLength="28.2" lengthAdjust="spacingAndGlyphs" stroke="#222" stroke-width="0.22" stroke-linejoin="round" >Aux. 1</text>
<rect x="266.70000000000005" y="271.6" width="48.8" height="59.2" rx="4.5" fill="#e4e4e4" stroke="#dedede" stroke-width="0.8"/>
<circle cx="278.9" cy="283.2" r="5.25" fill="#fff" stroke="#c2c2c2" stroke-width="0.9"/>
<text x="289.5" y="286.3" font-size="8.7" fill="#222" text-anchor="start" font-weight="normal" textLength="9.9" lengthAdjust="spacingAndGlyphs" stroke="#222" stroke-width="0.3" stroke-linejoin="round" >Up</text>
<circle cx="278.9" cy="300.70000000000005" r="5.6" fill="#157efb"/>
<circle cx="278.9" cy="300.70000000000005" r="2.2" fill="#fff"/>
<text x="289.5" y="303.80000000000007" font-size="8.7" fill="#222" text-anchor="start" font-weight="normal" textLength="16.4" lengthAdjust="spacingAndGlyphs" stroke="#222" stroke-width="0.3" stroke-linejoin="round" >Free</text>
<circle cx="278.9" cy="318.20000000000005" r="5.25" fill="#fff" stroke="#c2c2c2" stroke-width="0.9"/>
<text x="289.5" y="321.30000000000007" font-size="8.7" fill="#222" text-anchor="start" font-weight="normal" textLength="21.0" lengthAdjust="spacingAndGlyphs" stroke="#222" stroke-width="0.3" stroke-linejoin="round" >Down</text>
<rect x="4.75" y="348.70000000000005" width="77.38000000000001" height="19.1" fill="url(#gLight1)"/>
<rect x="4.75" y="367.80000000000007" width="77.38000000000001" height="19.1" fill="url(#gDark)"/>
<rect x="4.75" y="386.90000000000003" width="77.38000000000001" height="20.0" fill="url(#gLight2)"/>
<line x1="5.2" y1="348.70000000000005" x2="5.2" y2="406.90000000000003" stroke="#adadad" stroke-width="0.95"/>
<line x1="24.32" y1="348.70000000000005" x2="24.32" y2="406.90000000000003" stroke="#b6b6b6" stroke-width="0.95"/>
<line x1="43.44" y1="348.70000000000005" x2="43.44" y2="406.90000000000003" stroke="#b6b6b6" stroke-width="0.95"/>
<line x1="62.56" y1="348.70000000000005" x2="62.56" y2="406.90000000000003" stroke="#b6b6b6" stroke-width="0.95"/>
<line x1="81.68" y1="348.70000000000005" x2="81.68" y2="406.90000000000003" stroke="#adadad" stroke-width="0.95"/>
<line x1="4.75" y1="349.15" x2="82.13000000000001" y2="349.15" stroke="#adadad" stroke-width="0.95"/>
<line x1="4.75" y1="368.25" x2="82.13000000000001" y2="368.25" stroke="#b8b8b8" stroke-width="0.95"/>
<line x1="4.75" y1="387.35" x2="82.13000000000001" y2="387.35" stroke="#b8b8b8" stroke-width="0.95"/>
<line x1="4.75" y1="406.45" x2="82.13000000000001" y2="406.45" stroke="#adadad" stroke-width="0.95"/>
<circle cx="14.76" cy="358.7" r="3.4" fill="#fff" stroke="#000" stroke-width="1.7"/>
<circle cx="14.76" cy="377.8" r="3.4" fill="#fff" stroke="#000" stroke-width="1.7"/>
<path d="M15.06,374.0 A3.8,3.8 0 0 0 15.06,381.6 Z" fill="#000"/>
<circle cx="14.76" cy="396.9" r="4.2" fill="#000"/>
<circle cx="33.88" cy="358.7" r="3.4" fill="#fff" stroke="#000" stroke-width="1.7"/>
<circle cx="33.88" cy="377.8" r="3.4" fill="#fff" stroke="#000" stroke-width="1.7"/>
<path d="M34.18,374.0 A3.8,3.8 0 0 0 34.18,381.6 Z" fill="#000"/>
<circle cx="33.88" cy="396.9" r="4.2" fill="#000"/>
<circle cx="53.0" cy="358.7" r="3.4" fill="#fff" stroke="#000" stroke-width="1.7"/>
<circle cx="53.0" cy="377.8" r="3.4" fill="#fff" stroke="#000" stroke-width="1.7"/>
<path d="M53.3,374.0 A3.8,3.8 0 0 0 53.3,381.6 Z" fill="#000"/>
<circle cx="53.0" cy="396.9" r="4.2" fill="#000"/>
<circle cx="72.12" cy="358.7" r="3.4" fill="#fff" stroke="#000" stroke-width="1.7"/>
<circle cx="72.12" cy="377.8" r="3.4" fill="#fff" stroke="#000" stroke-width="1.7"/>
<path d="M72.42,374.0 A3.8,3.8 0 0 0 72.42,381.6 Z" fill="#000"/>
<circle cx="72.12" cy="396.9" r="4.2" fill="#000"/>
<rect x="4.75" y="408.50000000000006" width="77.38000000000001" height="63.6" fill="#e9e9e9"/>
<rect x="5.2" y="408.95000000000005" width="19.12" height="62.7" fill="none" stroke="#a8a8a8" stroke-width="0.95"/>
<rect x="6.15" y="409.90000000000003" width="17.22" height="60.800000000000004" fill="none" stroke="#f4f4f4" stroke-width="0.8"/>
<line x1="7.359999999999999" y1="412.95" x2="22.16" y2="412.95" stroke="#a0a0a0" stroke-width="0.95"/>
<line x1="7.359999999999999" y1="423.57" x2="22.16" y2="423.57" stroke="#a0a0a0" stroke-width="0.95"/>
<line x1="7.359999999999999" y1="434.19" x2="22.16" y2="434.19" stroke="#a0a0a0" stroke-width="0.95"/>
<line x1="7.359999999999999" y1="444.81" x2="22.16" y2="444.81" stroke="#a0a0a0" stroke-width="0.95"/>
<line x1="7.359999999999999" y1="455.43" x2="22.16" y2="455.43" stroke="#a0a0a0" stroke-width="0.95"/>
<line x1="7.359999999999999" y1="466.05" x2="22.16" y2="466.05" stroke="#a0a0a0" stroke-width="0.95"/>
<line x1="14.76" y1="412.50000000000006" x2="14.76" y2="465.50000000000006" stroke="#8a8a8a" stroke-width="2.1"/>
<rect x="7.16" y="464.40000000000003" width="15.2" height="5.8" fill="#7F7FFF" stroke="rgba(40,10,10,0.82)" stroke-width="1.1"/>
<rect x="9.26" y="474.80000000000007" width="11" height="11.1" rx="3" fill="#fff" stroke="#d2d2d2" stroke-width="0.9"/>
<rect x="24.32" y="408.95000000000005" width="19.12" height="62.7" fill="none" stroke="#a8a8a8" stroke-width="0.95"/>
<rect x="25.27" y="409.90000000000003" width="17.22" height="60.800000000000004" fill="none" stroke="#f4f4f4" stroke-width="0.8"/>
<line x1="26.480000000000004" y1="412.95" x2="41.28" y2="412.95" stroke="#a0a0a0" stroke-width="0.95"/>
<line x1="26.480000000000004" y1="423.57" x2="41.28" y2="423.57" stroke="#a0a0a0" stroke-width="0.95"/>
<line x1="26.480000000000004" y1="434.19" x2="41.28" y2="434.19" stroke="#a0a0a0" stroke-width="0.95"/>
<line x1="26.480000000000004" y1="444.81" x2="41.28" y2="444.81" stroke="#a0a0a0" stroke-width="0.95"/>
<line x1="26.480000000000004" y1="455.43" x2="41.28" y2="455.43" stroke="#a0a0a0" stroke-width="0.95"/>
<line x1="26.480000000000004" y1="466.05" x2="41.28" y2="466.05" stroke="#a0a0a0" stroke-width="0.95"/>
<line x1="33.88" y1="412.50000000000006" x2="33.88" y2="465.50000000000006" stroke="#8a8a8a" stroke-width="2.1"/>
<rect x="26.28" y="464.40000000000003" width="15.2" height="5.8" fill="#7F7FFF" stroke="rgba(40,10,10,0.82)" stroke-width="1.1"/>
<rect x="28.380000000000003" y="474.80000000000007" width="11" height="11.1" rx="3" fill="#fff" stroke="#d2d2d2" stroke-width="0.9"/>
<rect x="43.440000000000005" y="408.95000000000005" width="19.12" height="62.7" fill="none" stroke="#a8a8a8" stroke-width="0.95"/>
<rect x="44.39" y="409.90000000000003" width="17.22" height="60.800000000000004" fill="none" stroke="#f4f4f4" stroke-width="0.8"/>
<line x1="45.6" y1="412.95" x2="60.4" y2="412.95" stroke="#a0a0a0" stroke-width="0.95"/>
<line x1="45.6" y1="423.57" x2="60.4" y2="423.57" stroke="#a0a0a0" stroke-width="0.95"/>
<line x1="45.6" y1="434.19" x2="60.4" y2="434.19" stroke="#a0a0a0" stroke-width="0.95"/>
<line x1="45.6" y1="444.81" x2="60.4" y2="444.81" stroke="#a0a0a0" stroke-width="0.95"/>
<line x1="45.6" y1="455.43" x2="60.4" y2="455.43" stroke="#a0a0a0" stroke-width="0.95"/>
<line x1="45.6" y1="466.05" x2="60.4" y2="466.05" stroke="#a0a0a0" stroke-width="0.95"/>
<line x1="53.0" y1="412.50000000000006" x2="53.0" y2="465.50000000000006" stroke="#8a8a8a" stroke-width="2.1"/>
<rect x="45.4" y="464.40000000000003" width="15.2" height="5.8" fill="#7F7FFF" stroke="rgba(40,10,10,0.82)" stroke-width="1.1"/>
<rect x="47.5" y="474.80000000000007" width="11" height="11.1" rx="3" fill="#fff" stroke="#d2d2d2" stroke-width="0.9"/>
<rect x="62.56" y="408.95000000000005" width="19.12" height="62.7" fill="none" stroke="#a8a8a8" stroke-width="0.95"/>
<rect x="63.51" y="409.90000000000003" width="17.22" height="60.800000000000004" fill="none" stroke="#f4f4f4" stroke-width="0.8"/>
<line x1="64.72" y1="412.95" x2="79.52000000000001" y2="412.95" stroke="#a0a0a0" stroke-width="0.95"/>
<line x1="64.72" y1="423.57" x2="79.52000000000001" y2="423.57" stroke="#a0a0a0" stroke-width="0.95"/>
<line x1="64.72" y1="434.19" x2="79.52000000000001" y2="434.19" stroke="#a0a0a0" stroke-width="0.95"/>
<line x1="64.72" y1="444.81" x2="79.52000000000001" y2="444.81" stroke="#a0a0a0" stroke-width="0.95"/>
<line x1="64.72" y1="455.43" x2="79.52000000000001" y2="455.43" stroke="#a0a0a0" stroke-width="0.95"/>
<line x1="64.72" y1="466.05" x2="79.52000000000001" y2="466.05" stroke="#a0a0a0" stroke-width="0.95"/>
<line x1="72.12" y1="412.50000000000006" x2="72.12" y2="465.50000000000006" stroke="#8a8a8a" stroke-width="2.1"/>
<rect x="64.52000000000001" y="464.40000000000003" width="15.2" height="5.8" fill="#7F7FFF" stroke="rgba(40,10,10,0.82)" stroke-width="1.1"/>
<rect x="66.62" y="474.80000000000007" width="11" height="11.1" rx="3" fill="#fff" stroke="#d2d2d2" stroke-width="0.9"/>
<rect x="3.85" y="489.75000000000006" width="78.58000000000001" height="13.9" fill="#fafafa"/>
<rect x="5.25" y="491.15000000000003" width="75.98" height="11" fill="#7F7FFF" stroke="#1e1e1e" stroke-width="1"/>
<text x="14.61" y="499.95000000000005" font-size="8.7" fill="rgba(0,0,30,0.85)" text-anchor="middle" font-weight="normal" stroke="rgba(0,0,30,0.85)" stroke-width="0.18" stroke-linejoin="round" >9</text>
<line x1="24.17" y1="490.65000000000003" x2="24.17" y2="502.65000000000003" stroke="#1e1e1e" stroke-width="1"/>
<text x="33.73" y="499.95000000000005" font-size="8.7" fill="rgba(0,0,30,0.85)" text-anchor="middle" font-weight="normal" textLength="8.6" lengthAdjust="spacingAndGlyphs" stroke="rgba(0,0,30,0.85)" stroke-width="0.18" stroke-linejoin="round" >10</text>
<line x1="43.29" y1="490.65000000000003" x2="43.29" y2="502.65000000000003" stroke="#1e1e1e" stroke-width="1"/>
<text x="52.85" y="499.95000000000005" font-size="8.7" fill="rgba(0,0,30,0.85)" text-anchor="middle" font-weight="normal" textLength="8.6" lengthAdjust="spacingAndGlyphs" stroke="rgba(0,0,30,0.85)" stroke-width="0.18" stroke-linejoin="round" >11</text>
<line x1="62.41" y1="490.65000000000003" x2="62.41" y2="502.65000000000003" stroke="#1e1e1e" stroke-width="1"/>
<text x="71.97" y="499.95000000000005" font-size="8.7" fill="rgba(0,0,30,0.85)" text-anchor="middle" font-weight="normal" textLength="8.6" lengthAdjust="spacingAndGlyphs" stroke="rgba(0,0,30,0.85)" stroke-width="0.18" stroke-linejoin="round" >12</text>
<rect x="328.1" y="348.70000000000005" width="77.78" height="19.1" fill="url(#gLight1)"/>
<rect x="328.1" y="367.80000000000007" width="77.78" height="19.1" fill="url(#gDark)"/>
<rect x="328.1" y="386.90000000000003" width="77.78" height="20.0" fill="url(#gLight2)"/>
<line x1="328.55" y1="348.70000000000005" x2="328.55" y2="406.90000000000003" stroke="#adadad" stroke-width="0.95"/>
<line x1="347.77" y1="348.70000000000005" x2="347.77" y2="406.90000000000003" stroke="#b6b6b6" stroke-width="0.95"/>
<line x1="366.99" y1="348.70000000000005" x2="366.99" y2="406.90000000000003" stroke="#b6b6b6" stroke-width="0.95"/>
<line x1="386.21" y1="348.70000000000005" x2="386.21" y2="406.90000000000003" stroke="#b6b6b6" stroke-width="0.95"/>
<line x1="405.43" y1="348.70000000000005" x2="405.43" y2="406.90000000000003" stroke="#adadad" stroke-width="0.95"/>
<line x1="328.1" y1="349.15" x2="405.88" y2="349.15" stroke="#adadad" stroke-width="0.95"/>
<line x1="328.1" y1="368.25" x2="405.88" y2="368.25" stroke="#b8b8b8" stroke-width="0.95"/>
<line x1="328.1" y1="387.35" x2="405.88" y2="387.35" stroke="#b8b8b8" stroke-width="0.95"/>
<line x1="328.1" y1="406.45" x2="405.88" y2="406.45" stroke="#adadad" stroke-width="0.95"/>
<circle cx="338.16" cy="358.7" r="3.4" fill="#fff" stroke="#000" stroke-width="1.7"/>
<circle cx="338.16" cy="377.8" r="3.4" fill="#fff" stroke="#000" stroke-width="1.7"/>
<path d="M338.46,374.0 A3.8,3.8 0 0 0 338.46,381.6 Z" fill="#000"/>
<circle cx="338.16" cy="396.9" r="4.2" fill="#000"/>
<circle cx="357.38" cy="358.7" r="3.4" fill="#fff" stroke="#000" stroke-width="1.7"/>
<circle cx="357.38" cy="377.8" r="3.4" fill="#fff" stroke="#000" stroke-width="1.7"/>
<path d="M357.68,374.0 A3.8,3.8 0 0 0 357.68,381.6 Z" fill="#000"/>
<circle cx="357.38" cy="396.9" r="4.2" fill="#000"/>
<circle cx="376.6" cy="358.7" r="3.4" fill="#fff" stroke="#000" stroke-width="1.7"/>
<circle cx="376.6" cy="377.8" r="3.4" fill="#fff" stroke="#000" stroke-width="1.7"/>
<path d="M376.9,374.0 A3.8,3.8 0 0 0 376.9,381.6 Z" fill="#000"/>
<circle cx="376.6" cy="396.9" r="4.2" fill="#000"/>
<circle cx="395.82" cy="358.7" r="3.4" fill="#fff" stroke="#000" stroke-width="1.7"/>
<circle cx="395.82" cy="377.8" r="3.4" fill="#fff" stroke="#000" stroke-width="1.7"/>
<path d="M396.12,374.0 A3.8,3.8 0 0 0 396.12,381.6 Z" fill="#000"/>
<circle cx="395.82" cy="396.9" r="4.2" fill="#000"/>
<rect x="328.1" y="408.50000000000006" width="77.78" height="63.6" fill="#e9e9e9"/>
<rect x="328.55" y="408.95000000000005" width="19.22" height="62.7" fill="none" stroke="#a8a8a8" stroke-width="0.95"/>
<rect x="329.5" y="409.90000000000003" width="17.32" height="60.800000000000004" fill="none" stroke="#f4f4f4" stroke-width="0.8"/>
<line x1="330.76000000000005" y1="412.95" x2="345.56" y2="412.95" stroke="#a0a0a0" stroke-width="0.95"/>
<line x1="330.76000000000005" y1="423.57" x2="345.56" y2="423.57" stroke="#a0a0a0" stroke-width="0.95"/>
<line x1="330.76000000000005" y1="434.19" x2="345.56" y2="434.19" stroke="#a0a0a0" stroke-width="0.95"/>
<line x1="330.76000000000005" y1="444.81" x2="345.56" y2="444.81" stroke="#a0a0a0" stroke-width="0.95"/>
<line x1="330.76000000000005" y1="455.43" x2="345.56" y2="455.43" stroke="#a0a0a0" stroke-width="0.95"/>
<line x1="330.76000000000005" y1="466.05" x2="345.56" y2="466.05" stroke="#a0a0a0" stroke-width="0.95"/>
<line x1="338.16" y1="412.50000000000006" x2="338.16" y2="465.50000000000006" stroke="#8a8a8a" stroke-width="2.1"/>
<rect x="330.56" y="464.40000000000003" width="15.2" height="5.8" fill="#000000" stroke="#2a2a2a" stroke-width="1.1"/>
<rect x="332.66" y="474.80000000000007" width="11" height="11.1" rx="3" fill="#fff" stroke="#d2d2d2" stroke-width="0.9"/>
<rect x="347.77" y="408.95000000000005" width="19.22" height="62.7" fill="none" stroke="#a8a8a8" stroke-width="0.95"/>
<rect x="348.71999999999997" y="409.90000000000003" width="17.32" height="60.800000000000004" fill="none" stroke="#f4f4f4" stroke-width="0.8"/>
<line x1="349.98" y1="412.95" x2="364.78" y2="412.95" stroke="#a0a0a0" stroke-width="0.95"/>
<line x1="349.98" y1="423.57" x2="364.78" y2="423.57" stroke="#a0a0a0" stroke-width="0.95"/>
<line x1="349.98" y1="434.19" x2="364.78" y2="434.19" stroke="#a0a0a0" stroke-width="0.95"/>
<line x1="349.98" y1="444.81" x2="364.78" y2="444.81" stroke="#a0a0a0" stroke-width="0.95"/>
<line x1="349.98" y1="455.43" x2="364.78" y2="455.43" stroke="#a0a0a0" stroke-width="0.95"/>
<line x1="349.98" y1="466.05" x2="364.78" y2="466.05" stroke="#a0a0a0" stroke-width="0.95"/>
<line x1="357.38" y1="412.50000000000006" x2="357.38" y2="465.50000000000006" stroke="#8a8a8a" stroke-width="2.1"/>
<rect x="349.78" y="464.40000000000003" width="15.2" height="5.8" fill="#000000" stroke="#2a2a2a" stroke-width="1.1"/>
<rect x="351.88" y="474.80000000000007" width="11" height="11.1" rx="3" fill="#fff" stroke="#d2d2d2" stroke-width="0.9"/>
<rect x="366.99" y="408.95000000000005" width="19.22" height="62.7" fill="none" stroke="#a8a8a8" stroke-width="0.95"/>
<rect x="367.94" y="409.90000000000003" width="17.32" height="60.800000000000004" fill="none" stroke="#f4f4f4" stroke-width="0.8"/>
<line x1="369.20000000000005" y1="412.95" x2="384.0" y2="412.95" stroke="#a0a0a0" stroke-width="0.95"/>
<line x1="369.20000000000005" y1="423.57" x2="384.0" y2="423.57" stroke="#a0a0a0" stroke-width="0.95"/>
<line x1="369.20000000000005" y1="434.19" x2="384.0" y2="434.19" stroke="#a0a0a0" stroke-width="0.95"/>
<line x1="369.20000000000005" y1="444.81" x2="384.0" y2="444.81" stroke="#a0a0a0" stroke-width="0.95"/>
<line x1="369.20000000000005" y1="455.43" x2="384.0" y2="455.43" stroke="#a0a0a0" stroke-width="0.95"/>
<line x1="369.20000000000005" y1="466.05" x2="384.0" y2="466.05" stroke="#a0a0a0" stroke-width="0.95"/>
<line x1="376.6" y1="412.50000000000006" x2="376.6" y2="465.50000000000006" stroke="#8a8a8a" stroke-width="2.1"/>
<rect x="369.0" y="464.40000000000003" width="15.2" height="5.8" fill="#000000" stroke="#2a2a2a" stroke-width="1.1"/>
<rect x="371.1" y="474.80000000000007" width="11" height="11.1" rx="3" fill="#fff" stroke="#d2d2d2" stroke-width="0.9"/>
<rect x="386.21" y="408.95000000000005" width="19.22" height="62.7" fill="none" stroke="#a8a8a8" stroke-width="0.95"/>
<rect x="387.15999999999997" y="409.90000000000003" width="17.32" height="60.800000000000004" fill="none" stroke="#f4f4f4" stroke-width="0.8"/>
<line x1="388.42" y1="412.95" x2="403.21999999999997" y2="412.95" stroke="#a0a0a0" stroke-width="0.95"/>
<line x1="388.42" y1="423.57" x2="403.21999999999997" y2="423.57" stroke="#a0a0a0" stroke-width="0.95"/>
<line x1="388.42" y1="434.19" x2="403.21999999999997" y2="434.19" stroke="#a0a0a0" stroke-width="0.95"/>
<line x1="388.42" y1="444.81" x2="403.21999999999997" y2="444.81" stroke="#a0a0a0" stroke-width="0.95"/>
<line x1="388.42" y1="455.43" x2="403.21999999999997" y2="455.43" stroke="#a0a0a0" stroke-width="0.95"/>
<line x1="388.42" y1="466.05" x2="403.21999999999997" y2="466.05" stroke="#a0a0a0" stroke-width="0.95"/>
<line x1="395.82" y1="412.50000000000006" x2="395.82" y2="465.50000000000006" stroke="#8a8a8a" stroke-width="2.1"/>
<rect x="388.21999999999997" y="464.40000000000003" width="15.2" height="5.8" fill="#000000" stroke="#2a2a2a" stroke-width="1.1"/>
<rect x="390.32" y="474.80000000000007" width="11" height="11.1" rx="3" fill="#fff" stroke="#d2d2d2" stroke-width="0.9"/>
<rect x="327.20000000000005" y="489.75000000000006" width="78.98" height="13.9" fill="#fafafa"/>
<rect x="328.6" y="491.15000000000003" width="76.38" height="11" fill="#000000" stroke="#000" stroke-width="1"/>
<text x="338.01" y="499.95000000000005" font-size="8.7" fill="#fff" text-anchor="middle" font-weight="normal" textLength="8.6" lengthAdjust="spacingAndGlyphs" stroke="#fff" stroke-width="0.3" stroke-linejoin="round" >21</text>
<text x="357.23" y="499.95000000000005" font-size="8.7" fill="#fff" text-anchor="middle" font-weight="normal" textLength="8.6" lengthAdjust="spacingAndGlyphs" stroke="#fff" stroke-width="0.3" stroke-linejoin="round" >22</text>
<text x="376.45" y="499.95000000000005" font-size="8.7" fill="#fff" text-anchor="middle" font-weight="normal" textLength="8.6" lengthAdjust="spacingAndGlyphs" stroke="#fff" stroke-width="0.3" stroke-linejoin="round" >23</text>
<text x="395.67" y="499.95000000000005" font-size="8.7" fill="#fff" text-anchor="middle" font-weight="normal" textLength="8.6" lengthAdjust="spacingAndGlyphs" stroke="#fff" stroke-width="0.3" stroke-linejoin="round" >24</text>
<circle cx="119.6" cy="381.9" r="24.5" fill="#eeeeee" stroke="#c4c4c4" stroke-width="1.35"/>
<line x1="119.6" y1="381.9" x2="136.2" y2="381.9" stroke="#b0b0b0" stroke-width="1.5"/>
<circle cx="119.6" cy="381.9" r="1.9" fill="#adadad"/>
<circle cx="136.2" cy="381.9" r="4.3" fill="#7F7FFF"/>
<circle cx="291" cy="381.9" r="24.5" fill="#eeeeee" stroke="#c4c4c4" stroke-width="1.35"/>
<line x1="291" y1="381.9" x2="307.6" y2="381.9" stroke="#b0b0b0" stroke-width="1.5"/>
<circle cx="291" cy="381.9" r="1.9" fill="#adadad"/>
<circle cx="307.6" cy="381.9" r="4.3" fill="#000"/>
<text x="103.9" y="430.7" font-size="10.4" fill="#222" text-anchor="start" font-weight="normal" textLength="20.6" lengthAdjust="spacingAndGlyphs" stroke="#222" stroke-width="0.22" stroke-linejoin="round" >Blue</text>
<rect x="95.4" y="433.4" width="48.3" height="59.2" rx="4.5" fill="#e4e4e4" stroke="#dedede" stroke-width="0.8"/>
<circle cx="107.6" cy="445.0" r="5.25" fill="#fff" stroke="#c2c2c2" stroke-width="0.9"/>
<text x="117.8" y="448.1" font-size="8.7" fill="#222" text-anchor="start" font-weight="normal" textLength="9.9" lengthAdjust="spacingAndGlyphs" stroke="#222" stroke-width="0.3" stroke-linejoin="round" >Up</text>
<circle cx="107.6" cy="462.5" r="5.6" fill="#157efb"/>
<circle cx="107.6" cy="462.5" r="2.2" fill="#fff"/>
<text x="117.8" y="465.6" font-size="8.7" fill="#222" text-anchor="start" font-weight="normal" textLength="16.4" lengthAdjust="spacingAndGlyphs" stroke="#222" stroke-width="0.3" stroke-linejoin="round" >Free</text>
<circle cx="107.6" cy="480.0" r="5.25" fill="#fff" stroke="#c2c2c2" stroke-width="0.9"/>
<text x="117.8" y="483.1" font-size="8.7" fill="#222" text-anchor="start" font-weight="normal" textLength="21.0" lengthAdjust="spacingAndGlyphs" stroke="#222" stroke-width="0.3" stroke-linejoin="round" >Down</text>
<text x="275.20000000000005" y="430.7" font-size="10.4" fill="#222" text-anchor="start" font-weight="normal" textLength="28.2" lengthAdjust="spacingAndGlyphs" stroke="#222" stroke-width="0.22" stroke-linejoin="round" >Aux. 2</text>
<rect x="266.70000000000005" y="433.4" width="48.8" height="59.2" rx="4.5" fill="#e4e4e4" stroke="#dedede" stroke-width="0.8"/>
<circle cx="278.9" cy="445.0" r="5.25" fill="#fff" stroke="#c2c2c2" stroke-width="0.9"/>
<text x="289.5" y="448.1" font-size="8.7" fill="#222" text-anchor="start" font-weight="normal" textLength="9.9" lengthAdjust="spacingAndGlyphs" stroke="#222" stroke-width="0.3" stroke-linejoin="round" >Up</text>
<circle cx="278.9" cy="462.5" r="5.6" fill="#157efb"/>
<circle cx="278.9" cy="462.5" r="2.2" fill="#fff"/>
<text x="289.5" y="465.6" font-size="8.7" fill="#222" text-anchor="start" font-weight="normal" textLength="16.4" lengthAdjust="spacingAndGlyphs" stroke="#222" stroke-width="0.3" stroke-linejoin="round" >Free</text>
<circle cx="278.9" cy="480.0" r="5.25" fill="#fff" stroke="#c2c2c2" stroke-width="0.9"/>
<text x="289.5" y="483.1" font-size="8.7" fill="#222" text-anchor="start" font-weight="normal" textLength="21.0" lengthAdjust="spacingAndGlyphs" stroke="#222" stroke-width="0.3" stroke-linejoin="round" >Down</text>
<text x="204.3" y="38" font-size="8.6" fill="#222" text-anchor="middle" font-weight="normal" textLength="14.2" lengthAdjust="spacingAndGlyphs" stroke="#222" stroke-width="0.22" stroke-linejoin="round" >The</text>
<text x="204.3" y="48.5" font-size="8.6" fill="#222" text-anchor="middle" font-weight="normal" textLength="45" lengthAdjust="spacingAndGlyphs" stroke="#222" stroke-width="0.22" stroke-linejoin="round" >Magnificent</text>
<text x="204.3" y="58.9" font-size="8.6" fill="#222" text-anchor="middle" font-weight="normal" textLength="47.5" lengthAdjust="spacingAndGlyphs" stroke="#222" stroke-width="0.22" stroke-linejoin="round" >Mouseworks</text>
<text x="205.1" y="94.6" font-size="15.6" fill="#0a7bd8" text-anchor="middle" font-weight="normal" textLength="45.2" lengthAdjust="spacingAndGlyphs" stroke="#0a7bd8" stroke-width="0.3" stroke-linejoin="round" >Virtual</text>
<text x="205.3" y="113.8" font-size="15.6" fill="#0a7bd8" text-anchor="middle" font-weight="normal" textLength="42.6" lengthAdjust="spacingAndGlyphs" stroke="#0a7bd8" stroke-width="0.3" stroke-linejoin="round" >Grand</text>
<text x="205.2" y="132.7" font-size="15.6" fill="#0a7bd8" text-anchor="middle" font-weight="normal" textLength="48.2" lengthAdjust="spacingAndGlyphs" stroke="#0a7bd8" stroke-width="0.3" stroke-linejoin="round" >Master</text>
<text x="204" y="166" font-size="9" fill="#222" text-anchor="middle" font-weight="normal" textLength="56.7" lengthAdjust="spacingAndGlyphs" stroke="#222" stroke-width="0.1" stroke-linejoin="round" >© 2001 - 2022</text>
<rect x="164.20000000000002" y="195.6" width="21.4" height="40.4" fill="none" stroke="#FF7F7F" stroke-width="1.9"/>
<rect x="165.3" y="196.7" width="19.2" height="19.1" fill="url(#gDark)"/>
<rect x="165.3" y="215.79999999999998" width="19.2" height="19.1" fill="url(#gLight2)"/>
<rect x="165.3" y="196.7" width="19.2" height="38.2" fill="none" stroke="#a9a9a9" stroke-width="0.9"/>
<line x1="165.3" y1="215.79999999999998" x2="184.5" y2="215.79999999999998" stroke="#b4b4b4" stroke-width="0.9"/>
<circle cx="174.9" cy="206.2" r="3.4" fill="#fff" stroke="#000" stroke-width="1.7"/>
<circle cx="174.9" cy="225.39999999999998" r="4.2" fill="#000"/>
<rect x="225.0" y="195.6" width="21.4" height="40.4" fill="none" stroke="#FFFFFF" stroke-width="1.9"/>
<rect x="226.1" y="196.7" width="19.2" height="19.1" fill="url(#gDark)"/>
<rect x="226.1" y="215.79999999999998" width="19.2" height="19.1" fill="url(#gLight2)"/>
<rect x="226.1" y="196.7" width="19.2" height="38.2" fill="none" stroke="#a9a9a9" stroke-width="0.9"/>
<line x1="226.1" y1="215.79999999999998" x2="245.29999999999998" y2="215.79999999999998" stroke="#b4b4b4" stroke-width="0.9"/>
<circle cx="235.7" cy="206.2" r="3.4" fill="#fff" stroke="#000" stroke-width="1.7"/>
<circle cx="235.7" cy="225.39999999999998" r="4.2" fill="#000"/>
<rect x="164.20000000000002" y="244.1" width="21.4" height="40.4" fill="none" stroke="#7FFF7F" stroke-width="1.9"/>
<rect x="165.3" y="245.2" width="19.2" height="19.1" fill="url(#gDark)"/>
<rect x="165.3" y="264.3" width="19.2" height="19.1" fill="url(#gLight2)"/>
<rect x="165.3" y="245.2" width="19.2" height="38.2" fill="none" stroke="#a9a9a9" stroke-width="0.9"/>
<line x1="165.3" y1="264.3" x2="184.5" y2="264.3" stroke="#b4b4b4" stroke-width="0.9"/>
<circle cx="174.9" cy="254.7" r="3.4" fill="#fff" stroke="#000" stroke-width="1.7"/>
<circle cx="174.9" cy="273.9" r="4.2" fill="#000"/>
<rect x="195.5" y="245.2" width="19.2" height="19.1" fill="url(#gDark)"/>
<rect x="195.5" y="264.3" width="19.2" height="19.1" fill="url(#gLight2)"/>
<rect x="195.5" y="245.2" width="19.2" height="38.2" fill="none" stroke="#a9a9a9" stroke-width="0.9"/>
<line x1="195.5" y1="264.3" x2="214.7" y2="264.3" stroke="#b4b4b4" stroke-width="0.9"/>
<circle cx="205.1" cy="254.7" r="3.4" fill="#fff" stroke="#000" stroke-width="1.7"/>
<circle cx="205.1" cy="273.9" r="4.2" fill="#000"/>
<rect x="225.0" y="244.1" width="21.4" height="40.4" fill="none" stroke="#000000" stroke-width="1.9"/>
<rect x="226.1" y="245.2" width="19.2" height="19.1" fill="url(#gDark)"/>
<rect x="226.1" y="264.3" width="19.2" height="19.1" fill="url(#gLight2)"/>
<rect x="226.1" y="245.2" width="19.2" height="38.2" fill="none" stroke="#a9a9a9" stroke-width="0.9"/>
<line x1="226.1" y1="264.3" x2="245.29999999999998" y2="264.3" stroke="#b4b4b4" stroke-width="0.9"/>
<circle cx="235.7" cy="254.7" r="3.4" fill="#fff" stroke="#000" stroke-width="1.7"/>
<circle cx="235.7" cy="273.9" r="4.2" fill="#000"/>
<rect x="164.20000000000002" y="292.59999999999997" width="21.4" height="40.4" fill="none" stroke="#7F7FFF" stroke-width="1.9"/>
<rect x="165.3" y="293.7" width="19.2" height="19.1" fill="url(#gDark)"/>
<rect x="165.3" y="312.8" width="19.2" height="19.1" fill="url(#gLight2)"/>
<rect x="165.3" y="293.7" width="19.2" height="38.2" fill="none" stroke="#a9a9a9" stroke-width="0.9"/>
<line x1="165.3" y1="312.8" x2="184.5" y2="312.8" stroke="#b4b4b4" stroke-width="0.9"/>
<circle cx="174.9" cy="303.2" r="3.4" fill="#fff" stroke="#000" stroke-width="1.7"/>
<circle cx="174.9" cy="322.4" r="4.2" fill="#000"/>
<rect x="225.0" y="292.59999999999997" width="21.4" height="40.4" fill="none" stroke="#000000" stroke-width="1.9"/>
<rect x="226.1" y="293.7" width="19.2" height="19.1" fill="url(#gDark)"/>
<rect x="226.1" y="312.8" width="19.2" height="19.1" fill="url(#gLight2)"/>
<rect x="226.1" y="293.7" width="19.2" height="38.2" fill="none" stroke="#a9a9a9" stroke-width="0.9"/>
<line x1="226.1" y1="312.8" x2="245.29999999999998" y2="312.8" stroke="#b4b4b4" stroke-width="0.9"/>
<circle cx="235.7" cy="303.2" r="3.4" fill="#fff" stroke="#000" stroke-width="1.7"/>
<circle cx="235.7" cy="322.4" r="4.2" fill="#000"/>
<text x="205" y="362.3" font-size="10.7" fill="#222" text-anchor="middle" font-weight="normal" textLength="65.5" lengthAdjust="spacingAndGlyphs" stroke="#222" stroke-width="0.22" stroke-linejoin="round" >Grand Master</text>
<circle cx="204.7" cy="425.3" r="39.6" fill="#eeeeee" stroke="#c4c4c4" stroke-width="1.1"/>
<line x1="204.7" y1="425.3" x2="236.7" y2="425.3" stroke="#b0b0b0" stroke-width="2.0"/>
<circle cx="204.7" cy="425.3" r="1.9" fill="#adadad"/>
<circle cx="236.7" cy="425.3" r="4.9" fill="#b2b2b2"/>
<rect x="425.8" y="53" width="356.8" height="459.8" rx="5" fill="#e7e7e7" stroke="#e1e1e1" stroke-width="0.9"/>
<rect x="457" y="45.3" width="294.6" height="17" rx="5" fill="#e0e0e0" stroke="#d6d6d6" stroke-width="0.8"/>
<rect x="501.3" y="46.3" width="42.4" height="15.5" rx="4" fill="#ffffff" filter="url(#sh)"/>
<line x1="578" y1="49.5" x2="578" y2="58.5" stroke="#cbcbcb" stroke-width="0.9"/>
<line x1="627.5" y1="49.5" x2="627.5" y2="58.5" stroke="#cbcbcb" stroke-width="0.9"/>
<line x1="681.4" y1="49.5" x2="681.4" y2="58.5" stroke="#cbcbcb" stroke-width="0.9"/>
<text x="479.3" y="57.1" font-size="10.3" fill="#222" text-anchor="middle" font-weight="normal" textLength="25.2" lengthAdjust="spacingAndGlyphs" stroke="#222" stroke-width="0.22" stroke-linejoin="round" >About</text>
<text x="522.5" y="57.1" font-size="10.3" fill="#222" text-anchor="middle" font-weight="normal" textLength="24.9" lengthAdjust="spacingAndGlyphs" stroke="#222" stroke-width="0.22" stroke-linejoin="round" >Stage</text>
<text x="560.5" y="57.1" font-size="10.3" fill="#222" text-anchor="middle" font-weight="normal" textLength="15.5" lengthAdjust="spacingAndGlyphs" stroke="#222" stroke-width="0.22" stroke-linejoin="round" >Log</text>
<text x="602.9" y="57.1" font-size="10.3" fill="#222" text-anchor="middle" font-weight="normal" textLength="31.4" lengthAdjust="spacingAndGlyphs" stroke="#222" stroke-width="0.22" stroke-linejoin="round" >Manual</text>
<text x="654.6" y="57.1" font-size="10.3" fill="#222" text-anchor="middle" font-weight="normal" textLength="35.7" lengthAdjust="spacingAndGlyphs" stroke="#222" stroke-width="0.22" stroke-linejoin="round" >Connect</text>
<text x="715.9" y="57.1" font-size="10.3" fill="#222" text-anchor="middle" font-weight="normal" textLength="51.2" lengthAdjust="spacingAndGlyphs" stroke="#222" stroke-width="0.22" stroke-linejoin="round" >Preferences</text>
<rect x="440.6" y="68.1" width="326.8" height="429.8" rx="5.8" fill="none" stroke="#f6f6f6" stroke-width="1"/>
<rect x="441.6" y="69.1" width="324.8" height="427.8" rx="5" fill="#5e5e5e" stroke="#1c1c1c" stroke-width="1.1"/>
<circle cx="525" cy="107.7" r="16.85" fill="#FF7F7F" stroke="#9b9e9e" stroke-width="1.4"/>
<circle cx="525" cy="107.7" r="12.6" fill="#000"/>
<text x="525" y="142.1" font-size="14.9" fill="#c6c6c6" text-anchor="middle" font-weight="normal" stroke="#c6c6c6" stroke-width="0.25" stroke-linejoin="round" >1</text>
<circle cx="577.65" cy="107.7" r="16.85" fill="#FF7F7F" stroke="#9b9e9e" stroke-width="1.4"/>
<circle cx="577.65" cy="107.7" r="12.6" fill="#000"/>
<text x="577.65" y="142.1" font-size="14.9" fill="#c6c6c6" text-anchor="middle" font-weight="normal" stroke="#c6c6c6" stroke-width="0.25" stroke-linejoin="round" >2</text>
<circle cx="630.3" cy="107.7" r="16.85" fill="#FF7F7F" stroke="#9b9e9e" stroke-width="1.4"/>
<circle cx="630.3" cy="107.7" r="12.6" fill="#000"/>
<text x="630.3" y="142.1" font-size="14.9" fill="#c6c6c6" text-anchor="middle" font-weight="normal" stroke="#c6c6c6" stroke-width="0.25" stroke-linejoin="round" >3</text>
<circle cx="683" cy="107.7" r="16.85" fill="#FF7F7F" stroke="#9b9e9e" stroke-width="1.4"/>
<circle cx="683" cy="107.7" r="12.6" fill="#000"/>
<text x="683" y="142.1" font-size="14.9" fill="#c6c6c6" text-anchor="middle" font-weight="normal" stroke="#c6c6c6" stroke-width="0.25" stroke-linejoin="round" >4</text>
<circle cx="525" cy="175.4" r="16.85" fill="#7FFF7F" stroke="#9b9e9e" stroke-width="1.4"/>
<circle cx="525" cy="175.4" r="12.6" fill="#000"/>
<text x="525" y="209.8" font-size="14.9" fill="#c6c6c6" text-anchor="middle" font-weight="normal" stroke="#c6c6c6" stroke-width="0.25" stroke-linejoin="round" >5</text>
<circle cx="577.65" cy="175.4" r="16.85" fill="#7FFF7F" stroke="#9b9e9e" stroke-width="1.4"/>
<circle cx="577.65" cy="175.4" r="12.6" fill="#000"/>
<text x="577.65" y="209.8" font-size="14.9" fill="#c6c6c6" text-anchor="middle" font-weight="normal" stroke="#c6c6c6" stroke-width="0.25" stroke-linejoin="round" >6</text>
<circle cx="630.3" cy="175.4" r="16.85" fill="#7FFF7F" stroke="#9b9e9e" stroke-width="1.4"/>
<circle cx="630.3" cy="175.4" r="12.6" fill="#000"/>
<text x="630.3" y="209.8" font-size="14.9" fill="#c6c6c6" text-anchor="middle" font-weight="normal" stroke="#c6c6c6" stroke-width="0.25" stroke-linejoin="round" >7</text>
<circle cx="683" cy="175.4" r="16.85" fill="#7FFF7F" stroke="#9b9e9e" stroke-width="1.4"/>
<circle cx="683" cy="175.4" r="12.6" fill="#000"/>
<text x="683" y="209.8" font-size="14.9" fill="#c6c6c6" text-anchor="middle" font-weight="normal" stroke="#c6c6c6" stroke-width="0.25" stroke-linejoin="round" >8</text>
<circle cx="525" cy="243.1" r="16.85" fill="#7F7FFF" stroke="#9b9e9e" stroke-width="1.4"/>
<circle cx="525" cy="243.1" r="12.6" fill="#000"/>
<text x="525" y="277.5" font-size="14.9" fill="#c6c6c6" text-anchor="middle" font-weight="normal" stroke="#c6c6c6" stroke-width="0.25" stroke-linejoin="round" >9</text>
<circle cx="577.65" cy="243.1" r="16.85" fill="#7F7FFF" stroke="#9b9e9e" stroke-width="1.4"/>
<circle cx="577.65" cy="243.1" r="12.6" fill="#000"/>
<text x="577.65" y="277.5" font-size="14.9" fill="#c6c6c6" text-anchor="middle" font-weight="normal" stroke="#c6c6c6" stroke-width="0.25" stroke-linejoin="round" >10</text>
<circle cx="630.3" cy="243.1" r="16.85" fill="#7F7FFF" stroke="#9b9e9e" stroke-width="1.4"/>
<circle cx="630.3" cy="243.1" r="12.6" fill="#000"/>
<text x="630.3" y="277.5" font-size="14.9" fill="#c6c6c6" text-anchor="middle" font-weight="normal" stroke="#c6c6c6" stroke-width="0.25" stroke-linejoin="round" >11</text>
<circle cx="683" cy="243.1" r="16.85" fill="#7F7FFF" stroke="#9b9e9e" stroke-width="1.4"/>
<circle cx="683" cy="243.1" r="12.6" fill="#000"/>
<text x="683" y="277.5" font-size="14.9" fill="#c6c6c6" text-anchor="middle" font-weight="normal" stroke="#c6c6c6" stroke-width="0.25" stroke-linejoin="round" >12</text>
<circle cx="525" cy="310.8" r="16.85" fill="#FFFFFF" stroke="#9b9e9e" stroke-width="1.4"/>
<circle cx="525" cy="310.8" r="12.6" fill="#000"/>
<text x="525" y="345.2" font-size="14.9" fill="#c6c6c6" text-anchor="middle" font-weight="normal" stroke="#c6c6c6" stroke-width="0.25" stroke-linejoin="round" >13</text>
<circle cx="577.65" cy="310.8" r="16.85" fill="#FFFFFF" stroke="#9b9e9e" stroke-width="1.4"/>
<circle cx="577.65" cy="310.8" r="12.6" fill="#000"/>
<text x="577.65" y="345.2" font-size="14.9" fill="#c6c6c6" text-anchor="middle" font-weight="normal" stroke="#c6c6c6" stroke-width="0.25" stroke-linejoin="round" >14</text>
<circle cx="630.3" cy="310.8" r="16.85" fill="#FFFFFF" stroke="#9b9e9e" stroke-width="1.4"/>
<circle cx="630.3" cy="310.8" r="12.6" fill="#000"/>
<text x="630.3" y="345.2" font-size="14.9" fill="#c6c6c6" text-anchor="middle" font-weight="normal" stroke="#c6c6c6" stroke-width="0.25" stroke-linejoin="round" >15</text>
<circle cx="683" cy="310.8" r="16.85" fill="#FFFFFF" stroke="#9b9e9e" stroke-width="1.4"/>
<circle cx="683" cy="310.8" r="12.6" fill="#000"/>
<text x="683" y="345.2" font-size="14.9" fill="#c6c6c6" text-anchor="middle" font-weight="normal" stroke="#c6c6c6" stroke-width="0.25" stroke-linejoin="round" >16</text>
<circle cx="525" cy="378.5" r="17.0" fill="#000" stroke="#acacac" stroke-width="1.2"/>
<text x="525" y="412.9" font-size="14.9" fill="#c6c6c6" text-anchor="middle" font-weight="normal" stroke="#c6c6c6" stroke-width="0.25" stroke-linejoin="round" >17</text>
<circle cx="577.65" cy="378.5" r="17.0" fill="#000" stroke="#acacac" stroke-width="1.2"/>
<text x="577.65" y="412.9" font-size="14.9" fill="#c6c6c6" text-anchor="middle" font-weight="normal" stroke="#c6c6c6" stroke-width="0.25" stroke-linejoin="round" >18</text>
<circle cx="630.3" cy="378.5" r="17.0" fill="#000" stroke="#acacac" stroke-width="1.2"/>
<text x="630.3" y="412.9" font-size="14.9" fill="#c6c6c6" text-anchor="middle" font-weight="normal" stroke="#c6c6c6" stroke-width="0.25" stroke-linejoin="round" >19</text>
<circle cx="683" cy="378.5" r="17.0" fill="#000" stroke="#acacac" stroke-width="1.2"/>
<text x="683" y="412.9" font-size="14.9" fill="#c6c6c6" text-anchor="middle" font-weight="normal" stroke="#c6c6c6" stroke-width="0.25" stroke-linejoin="round" >20</text>
<circle cx="525" cy="446.2" r="17.0" fill="#000" stroke="#acacac" stroke-width="1.2"/>
<text x="525" y="480.6" font-size="14.9" fill="#c6c6c6" text-anchor="middle" font-weight="normal" stroke="#c6c6c6" stroke-width="0.25" stroke-linejoin="round" >21</text>
<circle cx="577.65" cy="446.2" r="17.0" fill="#000" stroke="#acacac" stroke-width="1.2"/>
<text x="577.65" y="480.6" font-size="14.9" fill="#c6c6c6" text-anchor="middle" font-weight="normal" stroke="#c6c6c6" stroke-width="0.25" stroke-linejoin="round" >22</text>
<circle cx="630.3" cy="446.2" r="17.0" fill="#000" stroke="#acacac" stroke-width="1.2"/>
<text x="630.3" y="480.6" font-size="14.9" fill="#c6c6c6" text-anchor="middle" font-weight="normal" stroke="#c6c6c6" stroke-width="0.25" stroke-linejoin="round" >23</text>
<circle cx="683" cy="446.2" r="17.0" fill="#000" stroke="#acacac" stroke-width="1.2"/>
<text x="683" y="480.6" font-size="14.9" fill="#c6c6c6" text-anchor="middle" font-weight="normal" stroke="#c6c6c6" stroke-width="0.25" stroke-linejoin="round" >24</text>
</g>
<rect x="2.4" y="1.5" width="795.4" height="526.8" rx="6.5" fill="none" stroke="rgba(255,255,255,0.8)" stroke-width="1"/>
</svg></body></html>
